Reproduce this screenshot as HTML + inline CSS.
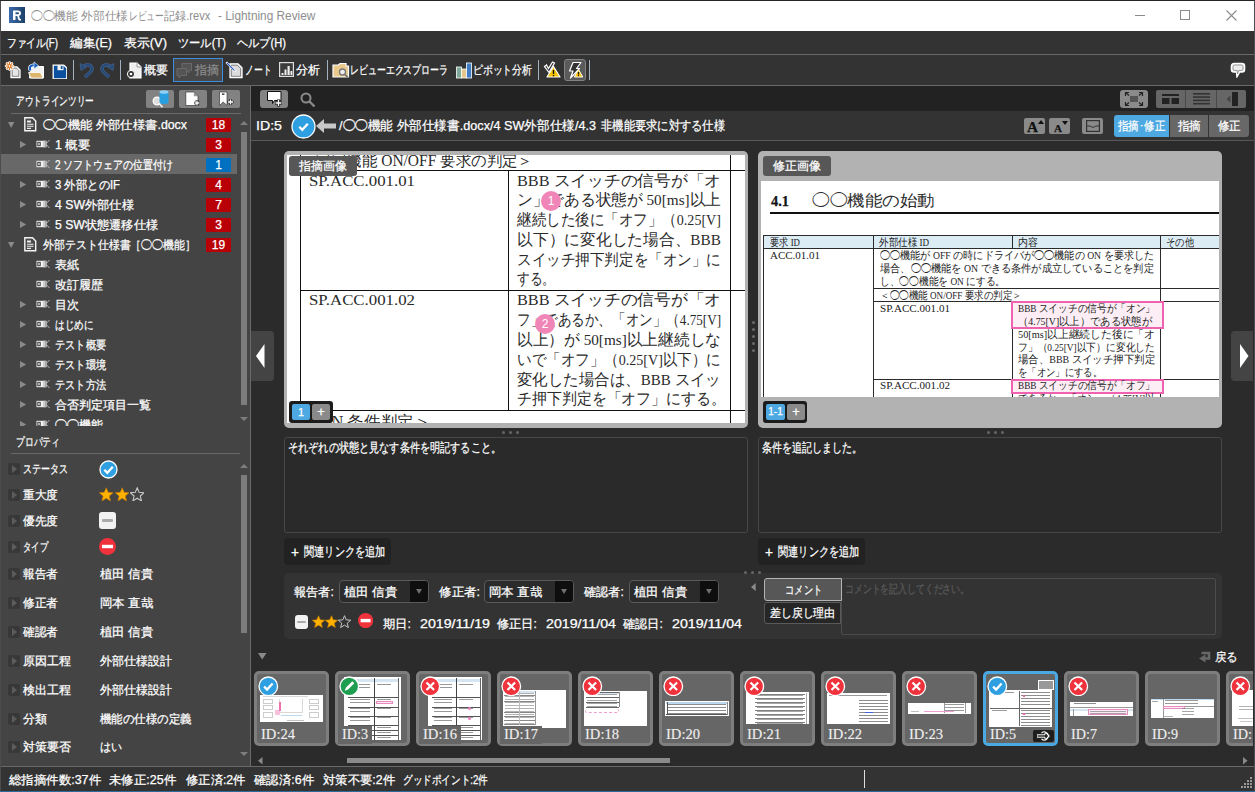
<!DOCTYPE html>
<html lang="ja"><head><meta charset="utf-8"><title>Lightning Review</title><style>
html,body{margin:0;padding:0;}
body{width:1255px;height:792px;overflow:hidden;background:#2b2b2b;position:relative;font-family:"Liberation Sans",sans-serif;font-size:12px;color:#fff;}
div,span,svg{position:absolute;box-sizing:border-box;}
.t{white-space:nowrap;transform-origin:0 50%;display:block;-webkit-text-stroke:.25px currentColor;}
.s{font-family:"Liberation Serif",serif;}
.clip{overflow:hidden;}
.s i{font-style:normal;font-family:"Liberation Sans",sans-serif;}
</style></head><body>
<div style="left:0px;top:0px;width:1255px;height:1px;background:#262626;"></div>
<div style="left:0px;top:1px;width:1px;height:791px;background:#4c4c4c;"></div>
<div style="left:1px;top:1px;width:1253px;height:30px;background:#ffffff;"></div>
<svg style="left:9px;top:7px;" width="16" height="16" viewBox="0 0 16 16"><defs><linearGradient id="ag"><stop offset="0" stop-color="#3c6aac"></stop><stop offset="1" stop-color="#1c4166"></stop></linearGradient></defs><rect width="16" height="16" fill="url(#ag)"></rect><path d="M4 3.500h4.800c2 0 3.200 1.100 3.200 2.700 0 1.300-.8 2.200-2 2.500l.6 2.300c.2.700.6 1 1.400 1V13.500c-1.600.2-2.700-.3-3.100-1.800L8.300 9H6.600V7.300h2c.9 0 1.400-.4 1.400-1.100S9.500 5.200 8.600 5.200H6.500V13H4z" fill="#fff"></path></svg>
<span class="t" style="left: 31px; top: 7.5px; height: 16px; line-height: 16px; font-size: 12px; color: rgb(142, 142, 142); -webkit-text-stroke: 0px; transform: scaleX(0.979);">◯◯機能 外部仕様</span>
<span class="t" style="left: 128.5px; top: 7.5px; height: 16px; line-height: 16px; font-size: 12px; color: rgb(142, 142, 142); -webkit-text-stroke: 0px; transform: scaleX(0.729);">レビュー</span>
<span class="t" style="left: 164px; top: 7.5px; height: 16px; line-height: 16px; font-size: 12px; color: rgb(142, 142, 142); -webkit-text-stroke: 0px; transform: scaleX(0.926);">記録.revx</span>
<span class="t" style="left: 218.2px; top: 7.5px; height: 16px; line-height: 16px; font-size: 12px; color: rgb(142, 142, 142); -webkit-text-stroke: 0px; transform: scaleX(0.986);">- Lightning Review</span>
<div style="left:1135px;top:15px;width:10px;height:1px;background:#8a8a8a;"></div>
<div style="left:1180px;top:10px;width:10px;height:10px;border:1px solid #8a8a8a;"></div>
<svg style="left:1226px;top:10px;" width="11" height="11" viewBox="0 0 11 11"><path d="M.5.5l10 10M10.500.5l-10 10" stroke="#8a8a8a" stroke-width="1.100" fill="none"></path></svg>
<div style="left:1px;top:31px;width:1254px;height:23px;background:#333333;"></div>
<span class="t" style="left: 7px; top: 35px; height: 16px; line-height: 16px; font-size: 12px; color: rgb(255, 255, 255); transform: scaleX(0.805);">ファイル(F)</span>
<span class="t" style="left: 70px; top: 35px; height: 16px; line-height: 16px; font-size: 12px; color: rgb(255, 255, 255); transform: scaleX(1.05);">編集(E)</span>
<span class="t" style="left: 124px; top: 35px; height: 16px; line-height: 16px; font-size: 12px; color: rgb(255, 255, 255); transform: scaleX(1.075);">表示(V)</span>
<span class="t" style="left: 178px; top: 35px; height: 16px; line-height: 16px; font-size: 12px; color: rgb(255, 255, 255); transform: scaleX(0.935);">ツール(T)</span>
<span class="t" style="left: 237px; top: 35px; height: 16px; line-height: 16px; font-size: 12px; color: rgb(255, 255, 255); transform: scaleX(0.93);">ヘルプ(H)</span>
<div style="left:1px;top:54px;width:1254px;height:1px;background:#696969;"></div>
<div style="left:1px;top:55px;width:1254px;height:30px;background:#333333;"></div>
<div style="left:1px;top:85px;width:1254px;height:1px;background:#696969;"></div>
<svg style="left:4px;top:61px;" width="18" height="18" viewBox="0 0 18 18"><path d="M7 6h6l3 3v7.500H7z" fill="#e6e6e6" stroke="#fff" stroke-width="1.300"></path><path d="M8.200 7.200h4.300l2.300 2.300v5.800H8.200z" fill="none" stroke="#444" stroke-width=".6"></path><g stroke="#fff" stroke-width="2.600" stroke-linecap="round"><path d="M5.500 1.500v7M2 5h7M3 2.500l5 5M8 2.500l-5 5"></path></g><g stroke="#e07a22" stroke-width="1.100"><path d="M5.500 1v8M1.500 5h8M2.700 2.200l5.600 5.600M8.300 2.200L2.700 7.800"></path></g><circle cx="5.500" cy="5" r="1.300" fill="#fff" stroke="#e07a22" stroke-width=".8"></circle></svg>
<svg style="left:27px;top:61px;" width="18" height="19" viewBox="0 0 18 19"><path d="M4 5.500h12.500V17H2.500z" fill="#f2f2f2" stroke="#fff" stroke-width="1"></path><path d="M1.500 11.500h12l2.500 5.500H4z" fill="#ddb56c" stroke="#fff" stroke-width=".8"></path><path d="M3.500 9.500C1.500 6 4.500 3.500 8 4.500" fill="none" stroke="#fff" stroke-width="3.400"></path><path d="M3.500 9.500C1.500 6 4.500 3.500 8 4.500" fill="none" stroke="#1560c0" stroke-width="2"></path><path d="M7 1l4.500 3.500L7 8z" fill="#1560c0" stroke="#fff" stroke-width=".6"></path></svg>
<svg style="left:51.5px;top:63.5px;" width="15" height="15" viewBox="0 0 15 15"><path d="M1.200 1.200h10.600L14.800 4v10.800H1.200z" fill="#0b4fa0" stroke="#fff" stroke-width="1.300"></path><rect x="5.500" y="1.200" width="6" height="5" fill="#f4f4f4"></rect><rect x="8.800" y="2" width="1.700" height="3" fill="#0b4fa0"></rect></svg>
<div style="left:73px;top:60px;width:1.3px;height:20px;background:#a4b2c0;"></div>
<svg style="left:78px;top:61px;" width="17" height="18" viewBox="0 0 17 18"><path d="M5.500 5.500C9 2.500 14 4 14 8c0 2.500-3 4.500-7 8" fill="none" stroke="#4a6c94" stroke-width="3.400"></path><path d="M5.500 5.500C9 2.500 14 4 14 8c0 2.500-3 4.500-7 8" fill="none" stroke="#274b78" stroke-width="2.400"></path><path d="M2 2.500l1 7L8.500 6z" fill="#274b78" stroke="#4a6c94" stroke-width=".6"></path></svg>
<svg style="left:99px;top:61px;" width="17" height="18" viewBox="0 0 17 18"><path d="M11.500 5.500C8 2.500 3 4 3 8c0 2.500 3 4.500 7 8" fill="none" stroke="#4a6c94" stroke-width="3.400"></path><path d="M11.500 5.500C8 2.500 3 4 3 8c0 2.500 3 4.500 7 8" fill="none" stroke="#274b78" stroke-width="2.400"></path><path d="M15 2.500l-1 7L8.500 6z" fill="#274b78" stroke="#4a6c94" stroke-width=".6"></path></svg>
<div style="left:120px;top:60px;width:1.3px;height:20px;background:#a4b2c0;"></div>
<svg style="left:126px;top:62px;" width="16" height="17" viewBox="0 0 16 17"><path d="M4 1h7l4 4v11H4z" fill="#eee" stroke="#fff" stroke-width="1.200"></path><path d="M11 1v4h4" fill="none" stroke="#999"></path><circle cx="5" cy="12" r="3.600" fill="#333" stroke="#fff" stroke-width="1"></circle><circle cx="5" cy="12" r="1.300" fill="#fff"></circle></svg>
<span class="t" style="left: 144px; top: 62px; height: 16px; line-height: 16px; font-size: 12px; color: rgb(255, 255, 255); transform: scaleX(1);">概要</span>
<div style="left:173px;top:58px;width:50px;height:24px;background:#484848;border:1px solid #3b8ee0;"></div>
<svg style="left:176px;top:62px;" width="17" height="17" viewBox="0 0 17 17"><path d="M6 1.500h9.500v7H13v2.500L10.500 8.500H6z" fill="#555" stroke="#6a6a6a"></path><path d="M1 6.500h9.500v7H5.500L3 16v-2.500H1z" fill="#555" stroke="#6a6a6a"></path></svg>
<span class="t" style="left: 195px; top: 62px; height: 16px; line-height: 16px; font-size: 12px; color: rgb(138, 138, 138); transform: scaleX(1);">指摘</span>
<svg style="left:225px;top:60px;" width="18" height="19" viewBox="0 0 18 19"><path d="M5 3.800h8l4 4V17.500H5z" fill="#dcdcdc" stroke="#fff" stroke-width="1.300"></path><path d="M6.300 5.200h6l3.300 3.300v7.800H6.300z" fill="none" stroke="#444" stroke-width=".6"></path><path d="M2 1.500l7.500 7.500 2 3.500-3.500-2L.5 3z" fill="#fff"></path><path d="M2.200 2.500l6.500 6.500 1.500 2.300-2.300-1.500L1.400 3.300z" fill="#1b55b8"></path></svg>
<span class="t" style="left: 244.5px; top: 62px; height: 16px; line-height: 16px; font-size: 12px; color: rgb(255, 255, 255); transform: scaleX(0.736);">ノート</span>
<svg style="left:279px;top:62px;" width="15" height="15" viewBox="0 0 15 15"><rect x=".6" y=".6" width="13.800" height="13.800" fill="#3c3c3c" stroke="#ddd" stroke-width="1.200"></rect><rect x="2.500" y="11" width="2" height="2" fill="#eee"></rect><rect x="5.500" y="7.500" width="2" height="5.500" fill="#eee"></rect><rect x="8.500" y="4" width="2.200" height="9" fill="#eee"></rect><rect x="11.500" y="9" width="1.800" height="4" fill="#eee"></rect></svg>
<span class="t" style="left: 296px; top: 62px; height: 16px; line-height: 16px; font-size: 12px; color: rgb(255, 255, 255); transform: scaleX(1);">分析</span>
<div style="left:327px;top:60px;width:1.3px;height:20px;background:#a4b2c0;"></div>
<svg style="left:332px;top:62px;" width="18" height="17" viewBox="0 0 18 17"><path d="M1 3h5.500L8 1.500h6V4h2.500v11H1z" fill="#e9c98c" stroke="#fff" stroke-width="1.200"></path><circle cx="10.500" cy="10" r="3" fill="#eee" stroke="#777" stroke-width="1.300"></circle><path d="M12.800 12.300l3 3" stroke="#777" stroke-width="1.800"></path></svg>
<span class="t" style="left: 350px; top: 62px; height: 16px; line-height: 16px; font-size: 12px; color: rgb(255, 255, 255); transform: scaleX(0.742);">レビューエクスプローラ</span>
<svg style="left:456px;top:62px;" width="17" height="17" viewBox="0 0 17 17"><rect x=".5" y="5" width="5" height="11" fill="#7fa898" stroke="#fff" stroke-width=".8"></rect><rect x="5.500" y="7" width="5" height="9" fill="#e6c88e" stroke="#fff" stroke-width=".8"></rect><rect x="10.500" y="1" width="5" height="15" fill="#3f7cc4" stroke="#fff" stroke-width=".8"></rect></svg>
<span class="t" style="left: 473px; top: 62px; height: 16px; line-height: 16px; font-size: 12px; color: rgb(255, 255, 255); transform: scaleX(0.819);">ピボット分析</span>
<div style="left:538px;top:60px;width:1.3px;height:20px;background:#a4b2c0;"></div>
<svg style="left:543px;top:60px;" width="18" height="19" viewBox="0 0 18 19"><path d="M1.500 6.500l2-1.500 2 3.500L9.500 2l2 1L6 12.500z" fill="#333" stroke="#fff" stroke-width="1.200"></path><path d="M10.500 6.500l6.500 10.500H4z" fill="#fcc400" stroke="#fff" stroke-width="1.200" stroke-linejoin="round"></path><path d="M10.500 10v4M10.500 15v1.300" stroke="#111" stroke-width="1.400"></path></svg>
<div style="left:564px;top:59px;width:22px;height:22px;background:#5a5a5a;border:1px solid #828282;border-radius:3px;"></div>
<svg style="left:566px;top:60px;" width="19" height="20" viewBox="0 0 19 20"><path d="M7 2.500h8l-4.500 6h3L4.500 18l2.500-7H3.500z" fill="#333" stroke="#fff" stroke-width="1.200" stroke-linejoin="round"></path><path d="M12.500 9.500l4.300 7.500H8.200z" fill="#fcc400" stroke="#fff" stroke-width="1" stroke-linejoin="round"></path><path d="M12.500 12v2.500M12.500 15.300v1" stroke="#111" stroke-width="1.300"></path></svg>
<div style="left:589px;top:60px;width:1.3px;height:20px;background:#a4b2c0;"></div>
<svg style="left:1230px;top:62px;" width="16" height="16" viewBox="0 0 16 16"><path d="M4 1.500h8a2.500 2.500 0 012.500 2.500v3.500a2.500 2.500 0 01-2.500 2.500H9.500L7 14.500 6.500 10H4a2.500 2.500 0 01-2.500-2.500V4A2.500 2.500 0 014 1.500z" fill="#ececec" stroke="#fff" stroke-width="1.600"></path><path d="M4.500 3h7a1.500 1.500 0 011.500 1.500v2.500a1.500 1.500 0 01-1.500 1.500H8.800L7.500 12 7.200 8.500H4.500a1.500 1.500 0 01-1.500-1.500V4.500A1.500 1.500 0 014.500 3z" fill="none" stroke="#777" stroke-width=".7"></path></svg>
<div style="left:1px;top:86px;width:249px;height:680px;background:#444444;"></div>
<div style="left:250px;top:86px;width:1px;height:680px;background:#696969;"></div>
<span class="t" style="left: 16px; top: 93px; height: 16px; line-height: 16px; font-size: 12px; color: rgb(255, 255, 255); transform: scaleX(0.722);">アウトラインツリー</span>
<div style="left:146px;top:90px;width:28px;height:18px;background:#828282;border-radius:2px;"></div>
<svg style="left:150px;top:89px;" width="22" height="20" viewBox="0 0 22 20"><circle cx="7" cy="12" r="3.800" fill="#ddd" stroke="#fff" stroke-width="1.300"></circle><path d="M9.500 15l3 3.200" stroke="#eee" stroke-width="1.800"></path><path d="M9.500 3v10a4.500 2 0 009 0V3z" fill="#2a9fe0"></path><ellipse cx="14" cy="3" rx="4.500" ry="1.800" fill="#8fd0f7"></ellipse></svg>
<div style="left:179px;top:90px;width:28px;height:18px;background:#828282;border-radius:2px;"></div>
<svg style="left:185px;top:91px;" width="17" height="17" viewBox="0 0 17 17"><path d="M.8 1h8l4.200 4.200V14.500H.8z" fill="#fff" stroke="#222" stroke-width=".6"></path><path d="M8.800 1v4.200h4.200z" fill="#999"></path><path d="M12 9v6M9 12h6" stroke="#222" stroke-width="2.600"></path><path d="M12 9.500v5M9.500 12h5" stroke="#fff" stroke-width="1.300"></path></svg>
<div style="left:212px;top:90px;width:28px;height:18px;background:#828282;border-radius:2px;"></div>
<svg style="left:218px;top:91px;" width="17" height="17" viewBox="0 0 17 17"><path d="M1.500 1h7.500v13.500L5.200 11 1.500 14.500z" fill="#fff" stroke="#222" stroke-width=".6"></path><rect x="4" y="2.500" width="2.500" height="1.300" fill="#222"></rect><path d="M12.500 8v6M9.500 11h6" stroke="#222" stroke-width="2.600"></path><path d="M12.500 8.500v5M10 11h5" stroke="#fff" stroke-width="1.300"></path></svg>
<div style="left:11px;top:113px;width:230px;height:1px;background:#6a6a6a;"></div>
<div class="clip" style="left:1px;top:114px;width:237px;height:312px;">
<svg style="left:7px;top:7.5px;" width="7" height="6" viewBox="0 0 7 6"><path d="M0 0h6.400L3.200 6z" fill="#8a8a8a"></path></svg>
<svg style="left:23px;top:3.0px;" width="13" height="15" viewBox="0 0 13 15"><path d="M.8.800h7.700l3.200 3.200v9.700H.8z" fill="#4a4a4a" stroke="#f4f4f4" stroke-width="1.400"></path><path d="M3 3.500h4v2H3z" fill="#eee"></path><path d="M3 7.200h6.500M3 9.300h6.500M3 11.400h4" stroke="#eee" stroke-width="1.100"></path></svg>
<span class="t" style="left: 42px; top: 2.5px; height: 16px; line-height: 16px; font-size: 12px; color: rgb(255, 255, 255); transform: scaleX(1.028);">◯◯機能 外部仕様書.docx</span>
<div style="left:205px;top:3.5px;width:25px;height:14px;background:#b80006;"></div>
<span class="t" style="left:205px;top:3.5px;height:14px;line-height:14px;font-size:12px;color:#fff;width:25px;text-align:center;">18</span>
<svg style="left:19px;top:26.6px;" width="7" height="7" viewBox="0 0 7 7"><path d="M0 0l6.200 3.500L0 7z" fill="#8a8a8a"></path></svg>
<svg style="left:34.6px;top:25.7px;" width="15" height="8" viewBox="0 0 15 8"><rect x=".5" y=".8" width="10" height="6.400" fill="#f0f0f0"></rect><rect x="7" y=".8" width="1.800" height="6.400" fill="#d0d0d0"></rect><rect x="8.800" y=".8" width="1.700" height="6.400" fill="#a8a8a8"></rect><rect x="1.800" y="2.300" width="2.400" height="3.400" fill="#ddd" stroke="#333" stroke-width=".9"></rect><path d="M13.500 0L9.800 4l3.700 4" fill="none" stroke="#bbb" stroke-width=".9"></path></svg>
<span class="t" style="left: 54px; top: 22.5px; height: 16px; line-height: 16px; font-size: 12px; color: rgb(255, 255, 255); transform: scaleX(1.029);">1 概要</span>
<div style="left:205px;top:23.5px;width:25px;height:14px;background:#b80006;"></div>
<span class="t" style="left:205px;top:23.5px;height:14px;line-height:14px;font-size:12px;color:#fff;width:25px;text-align:center;">3</span>
<div style="left:0px;top:40.0px;width:236px;height:20px;background:#686868;"></div>
<svg style="left:34.6px;top:45.7px;" width="15" height="8" viewBox="0 0 15 8"><rect x=".5" y=".8" width="10" height="6.400" fill="#f0f0f0"></rect><rect x="7" y=".8" width="1.800" height="6.400" fill="#d0d0d0"></rect><rect x="8.800" y=".8" width="1.700" height="6.400" fill="#a8a8a8"></rect><rect x="1.800" y="2.300" width="2.400" height="3.400" fill="#ddd" stroke="#333" stroke-width=".9"></rect><path d="M13.500 0L9.800 4l3.700 4" fill="none" stroke="#bbb" stroke-width=".9"></path></svg>
<span class="t" style="left: 54px; top: 42.5px; height: 16px; line-height: 16px; font-size: 12px; color: rgb(255, 255, 255); transform: scaleX(0.831);">2 ソフトウェアの位置付け</span>
<div style="left:205px;top:43.5px;width:25px;height:14px;background:#0070c0;"></div>
<span class="t" style="left:205px;top:43.5px;height:14px;line-height:14px;font-size:12px;color:#fff;width:25px;text-align:center;">1</span>
<svg style="left:19px;top:66.6px;" width="7" height="7" viewBox="0 0 7 7"><path d="M0 0l6.200 3.500L0 7z" fill="#8a8a8a"></path></svg>
<svg style="left:34.6px;top:65.7px;" width="15" height="8" viewBox="0 0 15 8"><rect x=".5" y=".8" width="10" height="6.400" fill="#f0f0f0"></rect><rect x="7" y=".8" width="1.800" height="6.400" fill="#d0d0d0"></rect><rect x="8.800" y=".8" width="1.700" height="6.400" fill="#a8a8a8"></rect><rect x="1.800" y="2.300" width="2.400" height="3.400" fill="#ddd" stroke="#333" stroke-width=".9"></rect><path d="M13.500 0L9.800 4l3.700 4" fill="none" stroke="#bbb" stroke-width=".9"></path></svg>
<span class="t" style="left: 54px; top: 62.5px; height: 16px; line-height: 16px; font-size: 12px; color: rgb(255, 255, 255); transform: scaleX(0.947);">3 外部とのIF</span>
<div style="left:205px;top:63.5px;width:25px;height:14px;background:#b80006;"></div>
<span class="t" style="left:205px;top:63.5px;height:14px;line-height:14px;font-size:12px;color:#fff;width:25px;text-align:center;">4</span>
<svg style="left:19px;top:86.6px;" width="7" height="7" viewBox="0 0 7 7"><path d="M0 0l6.200 3.500L0 7z" fill="#8a8a8a"></path></svg>
<svg style="left:34.6px;top:85.7px;" width="15" height="8" viewBox="0 0 15 8"><rect x=".5" y=".8" width="10" height="6.400" fill="#f0f0f0"></rect><rect x="7" y=".8" width="1.800" height="6.400" fill="#d0d0d0"></rect><rect x="8.800" y=".8" width="1.700" height="6.400" fill="#a8a8a8"></rect><rect x="1.800" y="2.300" width="2.400" height="3.400" fill="#ddd" stroke="#333" stroke-width=".9"></rect><path d="M13.500 0L9.800 4l3.700 4" fill="none" stroke="#bbb" stroke-width=".9"></path></svg>
<span class="t" style="left: 54px; top: 82.5px; height: 16px; line-height: 16px; font-size: 12px; color: rgb(255, 255, 255); transform: scaleX(1.021);">4 SW外部仕様</span>
<div style="left:205px;top:83.5px;width:25px;height:14px;background:#b80006;"></div>
<span class="t" style="left:205px;top:83.5px;height:14px;line-height:14px;font-size:12px;color:#fff;width:25px;text-align:center;">7</span>
<svg style="left:19px;top:106.6px;" width="7" height="7" viewBox="0 0 7 7"><path d="M0 0l6.200 3.500L0 7z" fill="#8a8a8a"></path></svg>
<svg style="left:34.6px;top:105.7px;" width="15" height="8" viewBox="0 0 15 8"><rect x=".5" y=".8" width="10" height="6.400" fill="#f0f0f0"></rect><rect x="7" y=".8" width="1.800" height="6.400" fill="#d0d0d0"></rect><rect x="8.800" y=".8" width="1.700" height="6.400" fill="#a8a8a8"></rect><rect x="1.800" y="2.300" width="2.400" height="3.400" fill="#ddd" stroke="#333" stroke-width=".9"></rect><path d="M13.500 0L9.800 4l3.700 4" fill="none" stroke="#bbb" stroke-width=".9"></path></svg>
<span class="t" style="left: 54px; top: 102.5px; height: 16px; line-height: 16px; font-size: 12px; color: rgb(255, 255, 255); transform: scaleX(1.016);">5 SW状態遷移仕様</span>
<div style="left:205px;top:103.5px;width:25px;height:14px;background:#b80006;"></div>
<span class="t" style="left:205px;top:103.5px;height:14px;line-height:14px;font-size:12px;color:#fff;width:25px;text-align:center;">3</span>
<svg style="left:7px;top:127.5px;" width="7" height="6" viewBox="0 0 7 6"><path d="M0 0h6.400L3.200 6z" fill="#8a8a8a"></path></svg>
<svg style="left:23px;top:123.0px;" width="13" height="15" viewBox="0 0 13 15"><path d="M.8.800h7.700l3.200 3.200v9.700H.8z" fill="#4a4a4a" stroke="#f4f4f4" stroke-width="1.400"></path><path d="M3 3.500h4v2H3z" fill="#eee"></path><path d="M3 7.200h6.500M3 9.300h6.500M3 11.400h4" stroke="#eee" stroke-width="1.100"></path></svg>
<span class="t" style="left: 42px; top: 122.5px; height: 16px; line-height: 16px; font-size: 12px; color: rgb(255, 255, 255); transform: scaleX(0.911);">外部テスト仕様書［◯◯機能］</span>
<div style="left:205px;top:123.5px;width:25px;height:14px;background:#b80006;"></div>
<span class="t" style="left:205px;top:123.5px;height:14px;line-height:14px;font-size:12px;color:#fff;width:25px;text-align:center;">19</span>
<svg style="left:34.6px;top:145.7px;" width="15" height="8" viewBox="0 0 15 8"><rect x=".5" y=".8" width="10" height="6.400" fill="#f0f0f0"></rect><rect x="7" y=".8" width="1.800" height="6.400" fill="#d0d0d0"></rect><rect x="8.800" y=".8" width="1.700" height="6.400" fill="#a8a8a8"></rect><rect x="1.800" y="2.300" width="2.400" height="3.400" fill="#ddd" stroke="#333" stroke-width=".9"></rect><path d="M13.500 0L9.800 4l3.700 4" fill="none" stroke="#bbb" stroke-width=".9"></path></svg>
<span class="t" style="left: 54px; top: 142.5px; height: 16px; line-height: 16px; font-size: 12px; color: rgb(255, 255, 255); transform: scaleX(1);">表紙</span>
<svg style="left:34.6px;top:165.7px;" width="15" height="8" viewBox="0 0 15 8"><rect x=".5" y=".8" width="10" height="6.400" fill="#f0f0f0"></rect><rect x="7" y=".8" width="1.800" height="6.400" fill="#d0d0d0"></rect><rect x="8.800" y=".8" width="1.700" height="6.400" fill="#a8a8a8"></rect><rect x="1.800" y="2.300" width="2.400" height="3.400" fill="#ddd" stroke="#333" stroke-width=".9"></rect><path d="M13.500 0L9.800 4l3.700 4" fill="none" stroke="#bbb" stroke-width=".9"></path></svg>
<span class="t" style="left: 54px; top: 162.5px; height: 16px; line-height: 16px; font-size: 12px; color: rgb(255, 255, 255); transform: scaleX(1);">改訂履歴</span>
<svg style="left:19px;top:186.6px;" width="7" height="7" viewBox="0 0 7 7"><path d="M0 0l6.200 3.500L0 7z" fill="#8a8a8a"></path></svg>
<svg style="left:34.6px;top:185.7px;" width="15" height="8" viewBox="0 0 15 8"><rect x=".5" y=".8" width="10" height="6.400" fill="#f0f0f0"></rect><rect x="7" y=".8" width="1.800" height="6.400" fill="#d0d0d0"></rect><rect x="8.800" y=".8" width="1.700" height="6.400" fill="#a8a8a8"></rect><rect x="1.800" y="2.300" width="2.400" height="3.400" fill="#ddd" stroke="#333" stroke-width=".9"></rect><path d="M13.500 0L9.800 4l3.700 4" fill="none" stroke="#bbb" stroke-width=".9"></path></svg>
<span class="t" style="left: 54px; top: 182.5px; height: 16px; line-height: 16px; font-size: 12px; color: rgb(255, 255, 255); transform: scaleX(1);">目次</span>
<svg style="left:19px;top:206.6px;" width="7" height="7" viewBox="0 0 7 7"><path d="M0 0l6.200 3.500L0 7z" fill="#8a8a8a"></path></svg>
<svg style="left:34.6px;top:205.7px;" width="15" height="8" viewBox="0 0 15 8"><rect x=".5" y=".8" width="10" height="6.400" fill="#f0f0f0"></rect><rect x="7" y=".8" width="1.800" height="6.400" fill="#d0d0d0"></rect><rect x="8.800" y=".8" width="1.700" height="6.400" fill="#a8a8a8"></rect><rect x="1.800" y="2.300" width="2.400" height="3.400" fill="#ddd" stroke="#333" stroke-width=".9"></rect><path d="M13.500 0L9.800 4l3.700 4" fill="none" stroke="#bbb" stroke-width=".9"></path></svg>
<span class="t" style="left: 54px; top: 202.5px; height: 16px; line-height: 16px; font-size: 12px; color: rgb(255, 255, 255); transform: scaleX(0.792);">はじめに</span>
<svg style="left:19px;top:226.6px;" width="7" height="7" viewBox="0 0 7 7"><path d="M0 0l6.200 3.500L0 7z" fill="#8a8a8a"></path></svg>
<svg style="left:34.6px;top:225.7px;" width="15" height="8" viewBox="0 0 15 8"><rect x=".5" y=".8" width="10" height="6.400" fill="#f0f0f0"></rect><rect x="7" y=".8" width="1.800" height="6.400" fill="#d0d0d0"></rect><rect x="8.800" y=".8" width="1.700" height="6.400" fill="#a8a8a8"></rect><rect x="1.800" y="2.300" width="2.400" height="3.400" fill="#ddd" stroke="#333" stroke-width=".9"></rect><path d="M13.500 0L9.800 4l3.700 4" fill="none" stroke="#bbb" stroke-width=".9"></path></svg>
<span class="t" style="left: 54px; top: 222.5px; height: 16px; line-height: 16px; font-size: 12px; color: rgb(255, 255, 255); transform: scaleX(0.85);">テスト概要</span>
<svg style="left:19px;top:246.6px;" width="7" height="7" viewBox="0 0 7 7"><path d="M0 0l6.200 3.500L0 7z" fill="#8a8a8a"></path></svg>
<svg style="left:34.6px;top:245.7px;" width="15" height="8" viewBox="0 0 15 8"><rect x=".5" y=".8" width="10" height="6.400" fill="#f0f0f0"></rect><rect x="7" y=".8" width="1.800" height="6.400" fill="#d0d0d0"></rect><rect x="8.800" y=".8" width="1.700" height="6.400" fill="#a8a8a8"></rect><rect x="1.800" y="2.300" width="2.400" height="3.400" fill="#ddd" stroke="#333" stroke-width=".9"></rect><path d="M13.500 0L9.800 4l3.700 4" fill="none" stroke="#bbb" stroke-width=".9"></path></svg>
<span class="t" style="left: 54px; top: 242.5px; height: 16px; line-height: 16px; font-size: 12px; color: rgb(255, 255, 255); transform: scaleX(0.85);">テスト環境</span>
<svg style="left:19px;top:266.6px;" width="7" height="7" viewBox="0 0 7 7"><path d="M0 0l6.200 3.500L0 7z" fill="#8a8a8a"></path></svg>
<svg style="left:34.6px;top:265.7px;" width="15" height="8" viewBox="0 0 15 8"><rect x=".5" y=".8" width="10" height="6.400" fill="#f0f0f0"></rect><rect x="7" y=".8" width="1.800" height="6.400" fill="#d0d0d0"></rect><rect x="8.800" y=".8" width="1.700" height="6.400" fill="#a8a8a8"></rect><rect x="1.800" y="2.300" width="2.400" height="3.400" fill="#ddd" stroke="#333" stroke-width=".9"></rect><path d="M13.500 0L9.800 4l3.700 4" fill="none" stroke="#bbb" stroke-width=".9"></path></svg>
<span class="t" style="left: 54px; top: 262.5px; height: 16px; line-height: 16px; font-size: 12px; color: rgb(255, 255, 255); transform: scaleX(0.85);">テスト方法</span>
<svg style="left:19px;top:286.6px;" width="7" height="7" viewBox="0 0 7 7"><path d="M0 0l6.200 3.500L0 7z" fill="#8a8a8a"></path></svg>
<svg style="left:34.6px;top:285.7px;" width="15" height="8" viewBox="0 0 15 8"><rect x=".5" y=".8" width="10" height="6.400" fill="#f0f0f0"></rect><rect x="7" y=".8" width="1.800" height="6.400" fill="#d0d0d0"></rect><rect x="8.800" y=".8" width="1.700" height="6.400" fill="#a8a8a8"></rect><rect x="1.800" y="2.300" width="2.400" height="3.400" fill="#ddd" stroke="#333" stroke-width=".9"></rect><path d="M13.500 0L9.800 4l3.700 4" fill="none" stroke="#bbb" stroke-width=".9"></path></svg>
<span class="t" style="left: 54px; top: 282.5px; height: 16px; line-height: 16px; font-size: 12px; color: rgb(255, 255, 255); transform: scaleX(1);">合否判定項目一覧</span>
<svg style="left:19px;top:306.6px;" width="7" height="7" viewBox="0 0 7 7"><path d="M0 0l6.200 3.500L0 7z" fill="#8a8a8a"></path></svg>
<svg style="left:34.6px;top:305.7px;" width="15" height="8" viewBox="0 0 15 8"><rect x=".5" y=".8" width="10" height="6.400" fill="#f0f0f0"></rect><rect x="7" y=".8" width="1.800" height="6.400" fill="#d0d0d0"></rect><rect x="8.800" y=".8" width="1.700" height="6.400" fill="#a8a8a8"></rect><rect x="1.800" y="2.300" width="2.400" height="3.400" fill="#ddd" stroke="#333" stroke-width=".9"></rect><path d="M13.500 0L9.800 4l3.700 4" fill="none" stroke="#bbb" stroke-width=".9"></path></svg>
<span class="t" style="left: 54px; top: 302.5px; height: 16px; line-height: 16px; font-size: 12px; color: rgb(255, 255, 255); transform: scaleX(1);">◯◯機能</span>
</div>
<svg style="left:240px;top:121px;" width="8" height="4" viewBox="0 0 8 4"><path d="M0 4h8L4 0z" fill="#7d7d7d"></path></svg>
<div style="left:241px;top:132px;width:5.5px;height:273px;background:#7d7d7d;"></div>
<svg style="left:240px;top:417px;" width="8" height="4" viewBox="0 0 8 4"><path d="M0 0h8L4 4z" fill="#7d7d7d"></path></svg>
<span class="t" style="left: 16px; top: 434px; height: 16px; line-height: 16px; font-size: 12px; color: rgb(255, 255, 255); transform: scaleX(0.733);">プロパティ</span>
<div style="left:11px;top:453px;width:229px;height:1px;background:#686868;"></div>
<svg style="left:240px;top:464px;" width="8" height="4" viewBox="0 0 8 4"><path d="M0 4h8L4 0z" fill="#7d7d7d"></path></svg>
<div style="left:241px;top:475px;width:5.5px;height:158px;background:#7d7d7d;"></div>
<svg style="left:240px;top:752px;" width="8" height="4" viewBox="0 0 8 4"><path d="M0 0h8L4 4z" fill="#7d7d7d"></path></svg>
<div style="left:8px;top:463px;width:12px;height:12px;background:#383838;border-radius:2px;"></div>
<svg style="left:12px;top:465px;" width="5" height="8" viewBox="0 0 5 8"><path d="M0 0l5 4-5 4z" fill="#5c5c5c"></path></svg>
<span class="t" style="left: 23px; top: 461px; height: 16px; line-height: 16px; font-size: 12px; color: rgb(255, 255, 255); transform: scaleX(0.75);">ステータス</span>
<svg style="left:98.5px;top:459.5px;" width="19.0" height="19.0" viewBox="0 0 19.0 19.0"><circle cx="9.5" cy="9.5" r="8.5" fill="#2e9fe0" stroke="#fff" stroke-width="1.300"></circle><path d="M5.3 9.8l3 3 5.500-6" fill="none" stroke="#fff" stroke-width="2.300"></path></svg>
<div style="left:8px;top:489px;width:12px;height:12px;background:#383838;border-radius:2px;"></div>
<svg style="left:12px;top:491px;" width="5" height="8" viewBox="0 0 5 8"><path d="M0 0l5 4-5 4z" fill="#5c5c5c"></path></svg>
<span class="t" style="left: 23px; top: 487px; height: 16px; line-height: 16px; font-size: 12px; color: rgb(255, 255, 255); transform: scaleX(0.972);">重大度</span>
<svg style="left:99.3px;top:486.5px;" width="14.4" height="14.4" viewBox="0 0 15 15"><polygon points="7.500,0.800 9.500,5.600 14.700,6 10.700,9.400 12,14.500 7.500,11.700 3,14.500 4.300,9.400 0.300,6 5.500,5.600" fill="#ffb300" stroke="#c77a00" stroke-width=".7"></polygon></svg>
<svg style="left:114.6px;top:486.5px;" width="14.4" height="14.4" viewBox="0 0 15 15"><polygon points="7.500,0.800 9.500,5.600 14.700,6 10.700,9.400 12,14.500 7.500,11.700 3,14.500 4.300,9.400 0.300,6 5.500,5.600" fill="#ffb300" stroke="#c77a00" stroke-width=".7"></polygon></svg>
<svg style="left:130px;top:486.5px;" width="14.4" height="14.4" viewBox="0 0 15 15"><polygon points="7.500,0.800 9.500,5.600 14.700,6 10.700,9.400 12,14.500 7.500,11.700 3,14.500 4.300,9.400 0.300,6 5.500,5.600" fill="none" stroke="#ccc" stroke-width="1.100"></polygon></svg>
<div style="left:8px;top:515px;width:12px;height:12px;background:#383838;border-radius:2px;"></div>
<svg style="left:12px;top:517px;" width="5" height="8" viewBox="0 0 5 8"><path d="M0 0l5 4-5 4z" fill="#5c5c5c"></path></svg>
<span class="t" style="left: 23px; top: 513px; height: 16px; line-height: 16px; font-size: 12px; color: rgb(255, 255, 255); transform: scaleX(0.972);">優先度</span>
<div style="left:99px;top:511.5px;width:17px;height:17px;background:#f2f2f2;border-radius:3px;"></div>
<div style="left:102.4px;top:519px;width:10.2px;height:2.5px;background:#aaa;border-radius:1px;"></div>
<div style="left:8px;top:541px;width:12px;height:12px;background:#383838;border-radius:2px;"></div>
<svg style="left:12px;top:543px;" width="5" height="8" viewBox="0 0 5 8"><path d="M0 0l5 4-5 4z" fill="#5c5c5c"></path></svg>
<span class="t" style="left: 23px; top: 539px; height: 16px; line-height: 16px; font-size: 12px; color: rgb(255, 255, 255); transform: scaleX(0.694);">タイプ</span>
<svg style="left:99.0px;top:537.7px;" width="17.0" height="17.0" viewBox="0 0 17.0 17.0"><circle cx="8.5" cy="8.5" r="8.5" fill="#f0323c"></circle><rect x="2.9749999999999996" y="6.8" width="11.05" height="3.400" fill="#fff"></rect></svg>
<div style="left:8px;top:568px;width:12px;height:12px;background:#383838;border-radius:2px;"></div>
<svg style="left:12px;top:570px;" width="5" height="8" viewBox="0 0 5 8"><path d="M0 0l5 4-5 4z" fill="#5c5c5c"></path></svg>
<span class="t" style="left: 23px; top: 566px; height: 16px; line-height: 16px; font-size: 12px; color: rgb(255, 255, 255); transform: scaleX(0.972);">報告者</span>
<span class="t" style="left: 100px; top: 566px; height: 16px; line-height: 16px; font-size: 12px; color: rgb(255, 255, 255); transform: scaleX(1.032);">植田 信貴</span>
<div style="left:8px;top:597px;width:12px;height:12px;background:#383838;border-radius:2px;"></div>
<svg style="left:12px;top:599px;" width="5" height="8" viewBox="0 0 5 8"><path d="M0 0l5 4-5 4z" fill="#5c5c5c"></path></svg>
<span class="t" style="left: 23px; top: 595px; height: 16px; line-height: 16px; font-size: 12px; color: rgb(255, 255, 255); transform: scaleX(0.972);">修正者</span>
<span class="t" style="left: 100px; top: 595px; height: 16px; line-height: 16px; font-size: 12px; color: rgb(255, 255, 255); transform: scaleX(1.032);">岡本 直哉</span>
<div style="left:8px;top:626px;width:12px;height:12px;background:#383838;border-radius:2px;"></div>
<svg style="left:12px;top:628px;" width="5" height="8" viewBox="0 0 5 8"><path d="M0 0l5 4-5 4z" fill="#5c5c5c"></path></svg>
<span class="t" style="left: 23px; top: 624px; height: 16px; line-height: 16px; font-size: 12px; color: rgb(255, 255, 255); transform: scaleX(0.972);">確認者</span>
<span class="t" style="left: 100px; top: 624px; height: 16px; line-height: 16px; font-size: 12px; color: rgb(255, 255, 255); transform: scaleX(1.032);">植田 信貴</span>
<div style="left:8px;top:655px;width:12px;height:12px;background:#383838;border-radius:2px;"></div>
<svg style="left:12px;top:657px;" width="5" height="8" viewBox="0 0 5 8"><path d="M0 0l5 4-5 4z" fill="#5c5c5c"></path></svg>
<span class="t" style="left: 23px; top: 653px; height: 16px; line-height: 16px; font-size: 12px; color: rgb(255, 255, 255); transform: scaleX(1);">原因工程</span>
<span class="t" style="left: 100px; top: 653px; height: 16px; line-height: 16px; font-size: 12px; color: rgb(255, 255, 255); transform: scaleX(1);">外部仕様設計</span>
<div style="left:8px;top:684px;width:12px;height:12px;background:#383838;border-radius:2px;"></div>
<svg style="left:12px;top:686px;" width="5" height="8" viewBox="0 0 5 8"><path d="M0 0l5 4-5 4z" fill="#5c5c5c"></path></svg>
<span class="t" style="left: 23px; top: 682px; height: 16px; line-height: 16px; font-size: 12px; color: rgb(255, 255, 255); transform: scaleX(1);">検出工程</span>
<span class="t" style="left: 100px; top: 682px; height: 16px; line-height: 16px; font-size: 12px; color: rgb(255, 255, 255); transform: scaleX(1);">外部仕様設計</span>
<div style="left:8px;top:713px;width:12px;height:12px;background:#383838;border-radius:2px;"></div>
<svg style="left:12px;top:715px;" width="5" height="8" viewBox="0 0 5 8"><path d="M0 0l5 4-5 4z" fill="#5c5c5c"></path></svg>
<span class="t" style="left: 23px; top: 711px; height: 16px; line-height: 16px; font-size: 12px; color: rgb(255, 255, 255); transform: scaleX(1);">分類</span>
<span class="t" style="left: 100px; top: 711px; height: 16px; line-height: 16px; font-size: 12px; color: rgb(255, 255, 255); transform: scaleX(0.958);">機能の仕様の定義</span>
<div style="left:8px;top:741px;width:12px;height:12px;background:#383838;border-radius:2px;"></div>
<svg style="left:12px;top:743px;" width="5" height="8" viewBox="0 0 5 8"><path d="M0 0l5 4-5 4z" fill="#5c5c5c"></path></svg>
<span class="t" style="left: 23px; top: 739px; height: 16px; line-height: 16px; font-size: 12px; color: rgb(255, 255, 255); transform: scaleX(1);">対策要否</span>
<span class="t" style="left: 100px; top: 739px; height: 16px; line-height: 16px; font-size: 12px; color: rgb(255, 255, 255); transform: scaleX(0.917);">はい</span>
<div style="left:251px;top:86px;width:1004px;height:25px;background:#222222;"></div>
<div style="left:251px;top:111px;width:1004px;height:29px;background:#333333;"></div>
<div style="left:251px;top:140px;width:1004px;height:1px;background:#585858;"></div>
<div style="left:260px;top:90px;width:28px;height:18px;background:#848484;border-radius:3px;"></div>
<svg style="left:266px;top:90px;" width="18" height="18" viewBox="0 0 18 18"><path d="M1.500 1.500h13.500v9H8.500L6.500 13.500V10.500H1.500z" fill="#fff" stroke="#111" stroke-width="1"></path><path d="M12.500 9.500v7M9 13h7" stroke="#111" stroke-width="3"></path><path d="M12.500 10v6M9.500 13h6" stroke="#fff" stroke-width="1.400"></path></svg>
<svg style="left:300px;top:92px;" width="16" height="16" viewBox="0 0 16 16"><circle cx="6" cy="6" r="4.500" fill="none" stroke="#8a8a8a" stroke-width="2"></circle><path d="M9.500 9.500l5 5" stroke="#8a8a8a" stroke-width="2.400"></path></svg>
<div style="left:1120px;top:90px;width:28px;height:18px;background:#8a8a8a;border-radius:3px;"></div>
<svg style="left:1124px;top:91px;" width="20" height="16" viewBox="0 0 20 16"><rect x="6" y="5" width="8" height="6" fill="#555"></rect><g stroke="#222" stroke-width="1.200" fill="none"><path d="M1.500 5V1.500H5M1.500 1.500l3.500 3"></path><path d="M18.500 5V1.500H15M18.500 1.500l-3.500 3"></path><path d="M1.500 11v3.500H5M1.500 14.500l3.500-3"></path><path d="M18.500 11v3.500H15M18.500 14.500l-3.500-3"></path></g></svg>
<div style="left:1156px;top:90px;width:90px;height:18px;background:#666;border-radius:2px;"></div>
<div style="left:1185px;top:90px;width:1px;height:18px;background:#4a4a4a;"></div>
<div style="left:1216px;top:90px;width:1px;height:18px;background:#4a4a4a;"></div>
<svg style="left:1161px;top:93px;" width="20" height="12" viewBox="0 0 20 12"><rect x="1" y="1" width="17" height="2" fill="#222"></rect><rect x="1" y="5" width="7.500" height="6" fill="#222"></rect><rect x="10.500" y="5" width="7.500" height="6" fill="#222"></rect></svg>
<svg style="left:1192px;top:93px;" width="20" height="12" viewBox="0 0 20 12"><g fill="#333"><rect x="1" y="0" width="17" height="1.600"></rect><rect x="1" y="3.300" width="17" height="1.600"></rect><rect x="1" y="6.600" width="17" height="1.600"></rect><rect x="1" y="9.900" width="17" height="1.600"></rect></g></svg>
<svg style="left:1224px;top:92px;" width="16" height="14" viewBox="0 0 16 14"><rect x="8" y="0" width="6" height="14" fill="#222"></rect><path d="M6.500 3.500v7l-4-3.500z" fill="#444"></path></svg>
<span class="t" style="left: 256px; top: 118px; height: 16px; line-height: 16px; font-size: 13px; color: rgb(255, 255, 255); transform: scaleX(1.09);">ID:5</span>
<svg style="left:291.0px;top:113.5px;" width="25.0" height="25.0" viewBox="0 0 25.0 25.0"><circle cx="12.5" cy="12.5" r="11.5" fill="#2e9fe0" stroke="#fff" stroke-width="1.300"></circle><path d="M8.3 12.8l3 3 5.500-6" fill="none" stroke="#fff" stroke-width="2.300"></path></svg>
<svg style="left:316px;top:119px;" width="20" height="14" viewBox="0 0 20 14"><path d="M0 7l8-7v4.500h12v5H8V14z" fill="#c8c8c8"></path></svg>
<span class="t" style="left: 339px; top: 118px; height: 16px; line-height: 16px; font-size: 13px; color: rgb(255, 255, 255); transform: scaleX(0.972);">/◯◯機能 外部仕様書.docx/4 SW外部仕様/4.3</span>
<span class="t" style="left: 601px; top: 118px; height: 16px; line-height: 16px; font-size: 13px; color: rgb(255, 255, 255); transform: scaleX(0.867);">非機能要求に対する仕様</span>
<div style="left:1024px;top:118px;width:21px;height:16px;background:#8a8a8a;border-radius:2px;"></div>
<span class="t s" style="left: 1027px; top: 118.5px; height: 16px; line-height: 16px; font-size: 15px; color: rgb(17, 17, 17); font-weight: bold; transform: scaleX(1.014);">A</span>
<svg style="left:1038px;top:120px;" width="6" height="4" viewBox="0 0 6 4"><path d="M0 4h6L3 0z" fill="#111"></path></svg>
<div style="left:1049px;top:118px;width:21px;height:16px;background:#8a8a8a;border-radius:2px;"></div>
<span class="t s" style="left: 1054px; top: 121px; height: 14px; line-height: 14px; font-size: 11px; color: rgb(17, 17, 17); font-weight: bold; transform: scaleX(1.006);">A</span>
<svg style="left:1062px;top:121px;" width="6" height="4" viewBox="0 0 6 4"><path d="M0 0h6L3 4z" fill="#111"></path></svg>
<div style="left:1082px;top:118px;width:21px;height:16px;background:#8a8a8a;border-radius:2px;"></div>
<svg style="left:1086px;top:120px;" width="14" height="12" viewBox="0 0 14 12"><rect x=".6" y=".6" width="12.800" height="10.800" fill="none" stroke="#333" stroke-width="1.200"></rect><path d="M1 6h3l3 1.500L10 6h3" fill="none" stroke="#333" stroke-width="1"></path></svg>
<div style="left:1114px;top:115px;width:55px;height:22px;background:#4ea8e2;border-radius:3px 0 0 3px;"></div>
<span class="t" style="left: 1118px; top: 118px; height: 16px; line-height: 16px; font-size: 12px; color: rgb(255, 255, 255); transform: scaleX(0.87);">指摘･修正</span>
<div style="left:1170px;top:115px;width:38px;height:22px;background:#676767;"></div>
<span class="t" style="left: 1178px; top: 118px; height: 16px; line-height: 16px; font-size: 12px; color: rgb(255, 255, 255); transform: scaleX(0.958);">指摘</span>
<div style="left:1209px;top:115px;width:40px;height:22px;background:#676767;border-radius:0 3px 3px 0;"></div>
<span class="t" style="left: 1218px; top: 118px; height: 16px; line-height: 16px; font-size: 12px; color: rgb(255, 255, 255); transform: scaleX(0.958);">修正</span>
<div style="left:251px;top:331px;width:23px;height:50px;background:#444;border-radius:0 4px 4px 0;"></div>
<svg style="left:256px;top:344px;" width="9" height="24" viewBox="0 0 9 24"><path d="M8.500 0v24L0 12z" fill="#fff"></path></svg>
<div style="left:1231px;top:331px;width:22px;height:50px;background:#444;border-radius:4px 0 0 4px;"></div>
<svg style="left:1240px;top:344px;" width="9" height="24" viewBox="0 0 9 24"><path d="M0 0v24l8.500-12z" fill="#fff"></path></svg>
<div style="left:284px;top:151px;width:464px;height:277px;background:#b2b2b2;border-radius:5px;"></div>
<div class="clip" style="left:287px;top:155px;width:458px;height:268px;background:#fff;">
<div style="left:13px;top:0px;width:1px;height:268px;background:#111;"></div>
<div style="left:221px;top:15px;width:1px;height:240px;background:#111;"></div>
<div style="left:443px;top:0px;width:1px;height:268px;background:#111;"></div>
<div style="left:13px;top:15px;width:445px;height:1px;background:#111;"></div>
<div style="left:13px;top:135px;width:445px;height:1px;background:#111;"></div>
<div style="left:13px;top:255px;width:445px;height:1px;background:#111;"></div>
<span class="t s" style="left: 13px; top: -3.5px; height: 18px; line-height: 18px; font-size: 16px; color: rgb(42, 42, 42); -webkit-text-stroke: 0px; transform: scaleX(0.967);"><i>＜◯◯機能</i> ON/OFF <i>要求の判定＞</i></span>
<span class="t s" style="left: 22px; top: 17px; height: 18px; line-height: 18px; font-size: 15.5px; color: rgb(42, 42, 42); -webkit-text-stroke: 0px; transform: scaleX(1.084);">SP.ACC.001.01</span>
<span class="t s" style="left: 22px; top: 136px; height: 18px; line-height: 18px; font-size: 15.5px; color: rgb(42, 42, 42); -webkit-text-stroke: 0px; transform: scaleX(1.084);">SP.ACC.001.02</span>
<span class="t s" style="left: 230px; top: 17px; height: 18px; line-height: 18px; font-size: 15.5px; color: rgb(42, 42, 42); -webkit-text-stroke: 0px; transform: scaleX(1.047);">BBB <i>スイッチの信号が「オ</i></span>
<span class="t s" style="left: 230px; top: 36px; height: 18px; line-height: 18px; font-size: 15.5px; color: rgb(42, 42, 42); -webkit-text-stroke: 0px; transform: scaleX(0.982);"><i>ン」である状態が</i> 50[ms]<i>以上</i></span>
<span class="t s" style="left: 230px; top: 56px; height: 18px; line-height: 18px; font-size: 15.5px; color: rgb(42, 42, 42); -webkit-text-stroke: 0px; transform: scaleX(0.908);"><i>継続した後に「オフ」（</i>0.25[V]</span>
<span class="t s" style="left: 230px; top: 76px; height: 18px; line-height: 18px; font-size: 15.5px; color: rgb(42, 42, 42); -webkit-text-stroke: 0px; transform: scaleX(0.985);"><i>以下）に変化した場合、</i>BBB</span>
<span class="t s" style="left: 230px; top: 96px; height: 18px; line-height: 18px; font-size: 15.5px; color: rgb(42, 42, 42); -webkit-text-stroke: 0px; transform: scaleX(0.911);"><i>スイッチ押下判定を「オン」に</i></span>
<span class="t s" style="left: 230px; top: 115px; height: 18px; line-height: 18px; font-size: 15.5px; color: rgb(42, 42, 42); -webkit-text-stroke: 0px; transform: scaleX(0.792);"><i>する。</i></span>
<span class="t s" style="left: 230px; top: 136px; height: 18px; line-height: 18px; font-size: 15.5px; color: rgb(42, 42, 42); -webkit-text-stroke: 0px; transform: scaleX(1.047);">BBB <i>スイッチの信号が「オ</i></span>
<span class="t s" style="left: 230px; top: 156px; height: 18px; line-height: 18px; font-size: 15.5px; color: rgb(42, 42, 42); -webkit-text-stroke: 0px; transform: scaleX(0.848);"><i>フ」であるか、「オン」（</i>4.75[V]</span>
<span class="t s" style="left: 230px; top: 176px; height: 18px; line-height: 18px; font-size: 15.5px; color: rgb(42, 42, 42); -webkit-text-stroke: 0px; transform: scaleX(0.982);"><i>以上）が</i> 50[ms]<i>以上継続しな</i></span>
<span class="t s" style="left: 230px; top: 196px; height: 18px; line-height: 18px; font-size: 15.5px; color: rgb(42, 42, 42); -webkit-text-stroke: 0px; transform: scaleX(0.908);"><i>いで「オフ」（</i>0.25[V]<i>以下）に</i></span>
<span class="t s" style="left: 230px; top: 216px; height: 18px; line-height: 18px; font-size: 15.5px; color: rgb(42, 42, 42); -webkit-text-stroke: 0px; transform: scaleX(0.967);"><i>変化した場合は、</i>BBB <i>スイッ</i></span>
<span class="t s" style="left: 230px; top: 235px; height: 18px; line-height: 18px; font-size: 15.5px; color: rgb(42, 42, 42); -webkit-text-stroke: 0px; transform: scaleX(0.933);"><i>チ押下判定を「オフ」にする。</i></span>
<span class="t s" style="left: 16px; top: 257.5px; height: 18px; line-height: 18px; font-size: 16px; color: rgb(42, 42, 42); -webkit-text-stroke: 0px; transform: scaleX(1.032);"><i>＜</i>ON <i>条件判定＞</i></span>
</div>
<div style="left:541.2px;top:191.2px;width:20px;height:20px;background:#ef86b7;border-radius:50%;"></div>
<span class="t" style="left:541.2px;top:191.2px;height:20px;line-height:20px;font-size:12px;color:#fff;width:20px;text-align:center;-webkit-text-stroke:0;">1</span>
<div style="left:535.2px;top:314.2px;width:20px;height:20px;background:#ef86b7;border-radius:50%;"></div>
<span class="t" style="left:535.2px;top:314.2px;height:20px;line-height:20px;font-size:12px;color:#fff;width:20px;text-align:center;-webkit-text-stroke:0;">2</span>
<div style="left:289px;top:156px;width:68px;height:20px;background:#575757;border-radius:3px;"></div>
<span class="t" style="left: 299px; top: 158px; height: 16px; line-height: 16px; font-size: 12px; color: rgb(255, 255, 255); transform: scaleX(1);">指摘画像</span>
<div style="left:289px;top:401px;width:44px;height:22px;background:#1c1c1c;border-radius:3px;"></div>
<div style="left:292px;top:404px;width:18px;height:16px;background:#4ea8e2;border-radius:2px;"></div>
<span class="t" style="left:292px;top:404px;height:16px;line-height:16px;font-size:11px;color:#fff;width:18px;text-align:center;">1</span>
<div style="left:312px;top:404px;width:18px;height:16px;background:#8a8a8a;border-radius:2px;"></div>
<span class="t" style="left:312px;top:403.5px;height:16px;line-height:16px;font-size:13px;color:#fff;width:18px;text-align:center;">+</span>
<div style="left:758px;top:151px;width:464px;height:277px;background:#b2b2b2;border-radius:5px;"></div>
<div class="clip" style="left:761px;top:181px;width:458px;height:216px;background:#fff;">
<span class="t s" style="left: 10px; top: 10.5px; height: 18px; line-height: 18px; font-size: 15px; color: rgb(17, 17, 17); font-weight: bold; transform: scaleX(0.96);">4.1</span>
<span class="t s" style="left: 51px; top: 10.5px; height: 18px; line-height: 18px; font-size: 15.5px; color: rgb(42, 42, 42); -webkit-text-stroke: 0px; transform: scaleX(1.098);"><i>◯◯機能の始動</i></span>
<div style="left:9px;top:31px;width:449px;height:2px;background:#111;"></div>
<div style="left:2px;top:54px;width:456px;height:13px;background:#dcecf5;"></div>
<div style="left:2px;top:54px;width:456px;height:1px;background:#2a2a2a;"></div>
<div style="left:2px;top:67px;width:456px;height:1px;background:#2a2a2a;"></div>
<div style="left:112px;top:107px;width:456px;height:1px;background:#2a2a2a;"></div>
<div style="left:112px;top:198px;width:456px;height:1px;background:#2a2a2a;"></div>
<div style="left:112px;top:120px;width:346px;height:1px;background:#2a2a2a;"></div>
<div style="left:2px;top:54px;width:1px;height:162px;background:#2a2a2a;"></div>
<div style="left:112px;top:54px;width:1px;height:162px;background:#2a2a2a;"></div>
<div style="left:399px;top:54px;width:1px;height:162px;background:#2a2a2a;"></div>
<div style="left:251px;top:54px;width:1px;height:13px;background:#2a2a2a;"></div>
<div style="left:251px;top:120px;width:1px;height:97px;background:#2a2a2a;"></div>
<span class="t s" style="left: 9px; top: 54.5px; height: 13px; line-height: 13px; font-size: 10.5px; color: rgb(34, 34, 34); -webkit-text-stroke: 0px; transform: scaleX(0.84);"><i>要求</i> ID</span>
<span class="t s" style="left: 118px; top: 54.5px; height: 13px; line-height: 13px; font-size: 10.5px; color: rgb(34, 34, 34); -webkit-text-stroke: 0px; transform: scaleX(0.866);"><i>外部仕様</i> ID</span>
<span class="t s" style="left: 257px; top: 54.5px; height: 13px; line-height: 13px; font-size: 10.5px; color: rgb(34, 34, 34); -webkit-text-stroke: 0px; transform: scaleX(0.909);"><i>内容</i></span>
<span class="t s" style="left: 405px; top: 54.5px; height: 13px; line-height: 13px; font-size: 10.5px; color: rgb(34, 34, 34); -webkit-text-stroke: 0px; transform: scaleX(0.848);"><i>その他</i></span>
<span class="t s" style="left: 9px; top: 67.5px; height: 13px; line-height: 13px; font-size: 10.5px; color: rgb(34, 34, 34); -webkit-text-stroke: 0px; transform: scaleX(1.045);">ACC.01.01</span>
<span class="t s" style="left: 119px; top: 67.5px; height: 13px; line-height: 13px; font-size: 10.5px; color: rgb(34, 34, 34); -webkit-text-stroke: 0px; transform: scaleX(0.92);"><i>◯◯機能が</i> OFF <i>の時にドライバが◯◯機能の</i> ON <i>を要求した</i></span>
<span class="t s" style="left: 119px; top: 80.5px; height: 13px; line-height: 13px; font-size: 10.5px; color: rgb(34, 34, 34); -webkit-text-stroke: 0px; transform: scaleX(0.927);"><i>場合、◯◯機能を</i> ON <i>できる条件が成立していることを判定</i></span>
<span class="t s" style="left: 119px; top: 93.5px; height: 13px; line-height: 13px; font-size: 10.5px; color: rgb(34, 34, 34); -webkit-text-stroke: 0px; transform: scaleX(0.884);"><i>し、◯◯機能を</i> ON <i>にする。</i></span>
<span class="t s" style="left: 119px; top: 107.5px; height: 13px; line-height: 13px; font-size: 10.5px; color: rgb(34, 34, 34); -webkit-text-stroke: 0px; transform: scaleX(0.868);"><i>＜◯◯機能</i> ON/OFF <i>要求の判定＞</i></span>
<span class="t s" style="left: 119px; top: 120.5px; height: 13px; line-height: 13px; font-size: 10.5px; color: rgb(34, 34, 34); -webkit-text-stroke: 0px; transform: scaleX(1.057);">SP.ACC.001.01</span>
<span class="t s" style="left: 119px; top: 197.5px; height: 13px; line-height: 13px; font-size: 10.5px; color: rgb(34, 34, 34); -webkit-text-stroke: 0px; transform: scaleX(1.057);">SP.ACC.001.02</span>
<div style="left:249.5px;top:119.5px;width:153.5px;height:28.5px;background:#fdeef5;border:2px solid #ee62b0;"></div>
<div style="left:249.5px;top:197.5px;width:153.5px;height:15px;background:#fdeef5;border:2px solid #ee62b0;"></div>
<span class="t s" style="left: 257px; top: 120.5px; height: 13px; line-height: 13px; font-size: 10.5px; color: rgb(34, 34, 34); -webkit-text-stroke: 0px; transform: scaleX(0.88);">BBB <i>スイッチの信号が「オン」</i></span>
<span class="t s" style="left: 257px; top: 133.5px; height: 13px; line-height: 13px; font-size: 10.5px; color: rgb(34, 34, 34); -webkit-text-stroke: 0px; transform: scaleX(0.937);"><i>（</i>4.75[V]<i>以上）である状態が</i></span>
<span class="t s" style="left: 257px; top: 146.5px; height: 13px; line-height: 13px; font-size: 10.5px; color: rgb(34, 34, 34); -webkit-text-stroke: 0px; transform: scaleX(0.98);">50[ms]<i>以上継続した後に「オ</i></span>
<span class="t s" style="left: 257px; top: 159.5px; height: 13px; line-height: 13px; font-size: 10.5px; color: rgb(34, 34, 34); -webkit-text-stroke: 0px; transform: scaleX(0.89);"><i>フ」（</i>0.25[V]<i>以下）に変化した</i></span>
<span class="t s" style="left: 257px; top: 171.5px; height: 13px; line-height: 13px; font-size: 10.5px; color: rgb(34, 34, 34); -webkit-text-stroke: 0px; transform: scaleX(0.947);"><i>場合、</i>BBB <i>スイッチ押下判定</i></span>
<span class="t s" style="left: 257px; top: 184.5px; height: 13px; line-height: 13px; font-size: 10.5px; color: rgb(34, 34, 34); -webkit-text-stroke: 0px; transform: scaleX(0.848);"><i>を「オン」にする。</i></span>
<span class="t s" style="left: 257px; top: 197.5px; height: 13px; line-height: 13px; font-size: 10.5px; color: rgb(34, 34, 34); -webkit-text-stroke: 0px; transform: scaleX(0.88);">BBB <i>スイッチの信号が「オフ」</i></span>
<span class="t s" style="left: 257px; top: 210.5px; height: 13px; line-height: 13px; font-size: 10.5px; color: rgb(34, 34, 34); -webkit-text-stroke: 0px; transform: scaleX(0.89);"><i>であるか、「オン」（</i>4.75[V]<i>以</i></span>
</div>
<div style="left:763px;top:156px;width:68px;height:20px;background:#575757;border-radius:3px;"></div>
<span class="t" style="left: 773px; top: 158px; height: 16px; line-height: 16px; font-size: 12px; color: rgb(255, 255, 255); transform: scaleX(1);">修正画像</span>
<div style="left:763px;top:401px;width:44px;height:22px;background:#1c1c1c;border-radius:3px;"></div>
<div style="left:766px;top:404px;width:19px;height:16px;background:#4ea8e2;border-radius:2px;"></div>
<span class="t" style="left:766px;top:404px;height:16px;line-height:16px;font-size:10px;color:#fff;width:19px;text-align:center;">1-1</span>
<div style="left:787px;top:404px;width:18px;height:16px;background:#8a8a8a;border-radius:2px;"></div>
<span class="t" style="left:787px;top:403.5px;height:16px;line-height:16px;font-size:13px;color:#fff;width:18px;text-align:center;">+</span>
<div style="left:502px;top:431px;width:3px;height:3px;background:#666;border-radius:1.5px;"></div>
<div style="left:509px;top:431px;width:3px;height:3px;background:#666;border-radius:1.5px;"></div>
<div style="left:516px;top:431px;width:3px;height:3px;background:#666;border-radius:1.5px;"></div>
<div style="left:987px;top:431px;width:3px;height:3px;background:#666;border-radius:1.5px;"></div>
<div style="left:994px;top:431px;width:3px;height:3px;background:#666;border-radius:1.5px;"></div>
<div style="left:1001px;top:431px;width:3px;height:3px;background:#666;border-radius:1.5px;"></div>
<div style="left:752px;top:321px;width:3px;height:3px;background:#6a6a6a;border-radius:1.5px;"></div>
<div style="left:752px;top:328px;width:3px;height:3px;background:#6a6a6a;border-radius:1.5px;"></div>
<div style="left:752px;top:335px;width:3px;height:3px;background:#6a6a6a;border-radius:1.5px;"></div>
<div style="left:752px;top:342px;width:3px;height:3px;background:#6a6a6a;border-radius:1.5px;"></div>
<div style="left:752px;top:349px;width:3px;height:3px;background:#6a6a6a;border-radius:1.5px;"></div>
<div style="left:284px;top:437px;width:464px;height:96px;background:#2a2a2a;border:1px solid #474747;border-radius:3px;"></div>
<span class="t" style="left: 288px; top: 440px; height: 16px; line-height: 16px; font-size: 13px; color: rgb(255, 255, 255); transform: scaleX(0.78);">それぞれの状態と見なす条件を明記すること。</span>
<div style="left:758px;top:437px;width:464px;height:96px;background:#2a2a2a;border:1px solid #474747;border-radius:3px;"></div>
<span class="t" style="left: 762px; top: 440px; height: 16px; line-height: 16px; font-size: 13px; color: rgb(255, 255, 255); transform: scaleX(0.769);">条件を追記しました。</span>
<div style="left:284px;top:538px;width:107px;height:27px;background:#222;border-radius:4px;"></div>
<span class="t" style="left: 291px; top: 544px; height: 16px; line-height: 16px; font-size: 14px; color: rgb(255, 255, 255); transform: scaleX(0.977);">+</span>
<span class="t" style="left: 303.5px; top: 544px; height: 16px; line-height: 16px; font-size: 13px; color: rgb(255, 255, 255); transform: scaleX(0.784);">関連リンクを追加</span>
<div style="left:758px;top:538px;width:107px;height:27px;background:#222;border-radius:4px;"></div>
<span class="t" style="left: 765px; top: 544px; height: 16px; line-height: 16px; font-size: 14px; color: rgb(255, 255, 255); transform: scaleX(0.977);">+</span>
<span class="t" style="left: 777.5px; top: 544px; height: 16px; line-height: 16px; font-size: 13px; color: rgb(255, 255, 255); transform: scaleX(0.784);">関連リンクを追加</span>
<div style="left:284px;top:573px;width:938px;height:66px;background:#333333;border-radius:5px;"></div>
<div style="left:744px;top:570.5px;width:3px;height:3px;background:#666;border-radius:1.5px;"></div>
<div style="left:751px;top:570.5px;width:3px;height:3px;background:#666;border-radius:1.5px;"></div>
<div style="left:758px;top:570.5px;width:3px;height:3px;background:#666;border-radius:1.5px;"></div>
<span class="t" style="left: 294px; top: 584px; height: 16px; line-height: 16px; font-size: 12px; color: rgb(255, 255, 255); transform: scaleX(1.017);">報告者:</span>
<div style="left:339px;top:580px;width:90px;height:23px;background:#2b2b2b;border:1px solid #5a5a5a;border-radius:4px;"></div>
<div style="left:410px;top:581px;width:18px;height:21px;background:#0e0e0e;border-radius:0 3px 3px 0;"></div>
<svg style="left:416px;top:589px;" width="6" height="5" viewBox="0 0 6 5"><path d="M0 0h6L3 5z" fill="#707070"></path></svg>
<span class="t" style="left: 344px; top: 583.5px; height: 16px; line-height: 16px; font-size: 12px; color: rgb(255, 255, 255); transform: scaleX(1.032);">植田 信貴</span>
<span class="t" style="left: 439px; top: 584px; height: 16px; line-height: 16px; font-size: 12px; color: rgb(255, 255, 255); transform: scaleX(1.042);">修正者:</span>
<div style="left:484px;top:580px;width:90px;height:23px;background:#2b2b2b;border:1px solid #5a5a5a;border-radius:4px;"></div>
<div style="left:555px;top:581px;width:18px;height:21px;background:#0e0e0e;border-radius:0 3px 3px 0;"></div>
<svg style="left:561px;top:589px;" width="6" height="5" viewBox="0 0 6 5"><path d="M0 0h6L3 5z" fill="#707070"></path></svg>
<span class="t" style="left: 489px; top: 583.5px; height: 16px; line-height: 16px; font-size: 12px; color: rgb(255, 255, 255); transform: scaleX(1.032);">岡本 直哉</span>
<span class="t" style="left: 584px; top: 584px; height: 16px; line-height: 16px; font-size: 12px; color: rgb(255, 255, 255); transform: scaleX(1.017);">確認者:</span>
<div style="left:629px;top:580px;width:90px;height:23px;background:#2b2b2b;border:1px solid #5a5a5a;border-radius:4px;"></div>
<div style="left:700px;top:581px;width:18px;height:21px;background:#0e0e0e;border-radius:0 3px 3px 0;"></div>
<svg style="left:706px;top:589px;" width="6" height="5" viewBox="0 0 6 5"><path d="M0 0h6L3 5z" fill="#707070"></path></svg>
<span class="t" style="left: 634px; top: 583.5px; height: 16px; line-height: 16px; font-size: 12px; color: rgb(255, 255, 255); transform: scaleX(1.032);">植田 信貴</span>
<div style="left:294.5px;top:615.0px;width:13.8px;height:13.8px;background:#f2f2f2;border-radius:3px;"></div>
<div style="left:297.26px;top:620.9px;width:8.28px;height:2.5px;background:#aaa;border-radius:1px;"></div>
<svg style="left:311.5px;top:615.2px;" width="13" height="13" viewBox="0 0 15 15"><polygon points="7.500,0.800 9.500,5.600 14.700,6 10.700,9.400 12,14.500 7.500,11.700 3,14.500 4.300,9.400 0.300,6 5.500,5.600" fill="#ffb300" stroke="#c77a00" stroke-width=".7"></polygon></svg>
<svg style="left:324.8px;top:615.2px;" width="13" height="13" viewBox="0 0 15 15"><polygon points="7.500,0.800 9.500,5.600 14.700,6 10.700,9.400 12,14.500 7.500,11.700 3,14.500 4.300,9.400 0.300,6 5.500,5.600" fill="#ffb300" stroke="#c77a00" stroke-width=".7"></polygon></svg>
<svg style="left:338.3px;top:615.2px;" width="13" height="13" viewBox="0 0 15 15"><polygon points="7.500,0.800 9.500,5.600 14.700,6 10.700,9.400 12,14.500 7.500,11.700 3,14.500 4.300,9.400 0.300,6 5.500,5.600" fill="none" stroke="#ccc" stroke-width="1.100"></polygon></svg>
<svg style="left:357.9px;top:613.1999999999999px;" width="15.2" height="15.2" viewBox="0 0 15.2 15.2"><circle cx="7.6" cy="7.6" r="7.6" fill="#f0323c"></circle><rect x="2.6599999999999997" y="5.8999999999999995" width="9.879999999999999" height="3.400" fill="#fff"></rect></svg>
<span class="t" style="left: 383px; top: 616px; height: 16px; line-height: 16px; font-size: 12px; color: rgb(255, 255, 255); transform: scaleX(1.024);">期日:</span>
<span class="t" style="left: 420px; top: 616px; height: 16px; line-height: 16px; font-size: 12px; color: rgb(255, 255, 255); transform: scaleX(1.183);">2019/11/19</span>
<span class="t" style="left: 497px; top: 616px; height: 16px; line-height: 16px; font-size: 12px; color: rgb(255, 255, 255); transform: scaleX(1.017);">修正日:</span>
<span class="t" style="left: 546px; top: 616px; height: 16px; line-height: 16px; font-size: 12px; color: rgb(255, 255, 255); transform: scaleX(1.183);">2019/11/04</span>
<span class="t" style="left: 623px; top: 616px; height: 16px; line-height: 16px; font-size: 12px; color: rgb(255, 255, 255); transform: scaleX(1.017);">確認日:</span>
<span class="t" style="left: 672px; top: 616px; height: 16px; line-height: 16px; font-size: 12px; color: rgb(255, 255, 255); transform: scaleX(1.183);">2019/11/04</span>
<svg style="left:751px;top:583px;" width="5" height="8" viewBox="0 0 5 8"><path d="M4.700 0v8.200L0 4.100z" fill="#8a8a8a"></path></svg>
<div style="left:841px;top:578px;width:375px;height:57px;background:#333;border:1px solid #4c4c4c;border-radius:2px;"></div>
<div style="left:764px;top:578px;width:78px;height:23px;background:#575757;border:1px solid #b4b4b4;border-radius:3px 0 0 3px;"></div>
<span class="t" style="left: 785px; top: 581.5px; height: 16px; line-height: 16px; font-size: 12px; color: rgb(255, 255, 255); transform: scaleX(0.771);">コメント</span>
<div style="left:764px;top:601.5px;width:77px;height:22.5px;background:#262626;border:1px solid #5a5a5a;border-radius:3px 0 0 3px;"></div>
<span class="t" style="left: 770px; top: 604.5px; height: 16px; line-height: 16px; font-size: 12px; color: rgb(255, 255, 255); transform: scaleX(0.903);">差し戻し理由</span>
<span class="t" style="left: 845px; top: 581px; height: 16px; line-height: 16px; font-size: 12px; color: rgb(90, 90, 90); transform: scaleX(0.738);">コメントを記入してください。</span>
<svg style="left:1199px;top:651px;" width="13" height="12" viewBox="0 0 13 12"><path d="M2.500 2h7.500v5.500H5.500" fill="none" stroke="#686868" stroke-width="2.600"></path><path d="M6.500 3.500v8L0 7.500z" fill="#686868"></path></svg>
<span class="t" style="left: 1215px; top: 649px; height: 16px; line-height: 16px; font-size: 12px; color: rgb(255, 255, 255); transform: scaleX(0.958);">戻る</span>
<svg style="left:258px;top:652.5px;" width="9" height="7" viewBox="0 0 9 7"><path d="M0 0h8.500L4.200 6.500z" fill="#8a8a8a"></path></svg>
<div class="clip" style="left:251px;top:668px;width:1002px;height:82px;">
<div style="left:3px;top:3px;width:75px;height:75px;background:#666666;border:3px solid #7e7e7e;border-radius:5px;"></div>
<div style="left:9px;top:27px;width:63px;height:27px;background:#fff;"></div>
<div style="left:12px;top:31px;width:10px;height:5px;border:1px solid #ccc;"></div>
<div style="left:12px;top:37px;width:10px;height:5px;border:1px solid #ccc;"></div>
<div style="left:12px;top:44px;width:10px;height:6px;border:1px solid #ccc;"></div>
<div style="left:58px;top:31px;width:10px;height:5px;border:1px solid #ccc;"></div>
<div style="left:58px;top:37px;width:10px;height:5px;border:1px solid #ccc;"></div>
<div style="left:58px;top:44px;width:10px;height:6px;border:1px solid #ccc;"></div>
<div style="left:28px;top:31px;width:24px;height:14px;border:1px solid #d8d8d8;border-top:0;"></div>
<div style="left:24px;top:42px;width:5px;height:5px;background:#f8c0dc;"></div>
<div style="left:28px;top:34px;width:1.5px;height:9px;background:#f070b0;"></div>
<div style="left:30px;top:47px;width:21px;height:1px;background:#bcd8ee;"></div>
<div style="left:36px;top:52px;width:17px;height:2px;background:repeating-linear-gradient(180deg,#aaa 0,#aaa 1px,transparent 1px,transparent 3px);opacity:.75;"></div>
<div style="left:12px;top:28px;width:45px;height:1px;background:repeating-linear-gradient(180deg,#ccc 0,#ccc 1px,transparent 1px,transparent 3px);opacity:.75;"></div>
<span class="t s" style="left: 10px; top: 58.7px; height: 16px; line-height: 16px; font-size: 14px; color: rgb(238, 238, 238); -webkit-text-stroke: 0.15px rgb(238, 238, 238); transform: scaleX(1.041);">ID:24</span>
<svg style="left:7.000000000000011px;top:7.900000000000045px;" width="20.6" height="20.6" viewBox="0 0 20.6 20.6"><circle cx="10.3" cy="10.3" r="9.3" fill="#2e9fe0" stroke="#fff" stroke-width="1.300"></circle><path d="M6.1000000000000005 10.600000000000001l3 3 5.500-6" fill="none" stroke="#fff" stroke-width="2.300"></path></svg>
<div style="left:84px;top:3px;width:75px;height:75px;background:#666666;border:3px solid #7e7e7e;border-radius:5px;"></div>
<div style="left:93px;top:9px;width:57px;height:63px;background:#fff;"></div>
<div style="left:97px;top:11px;width:50px;height:3px;background:#d5e6f2;"></div>
<div style="left:97px;top:29px;width:50px;height:1px;background:#555;"></div>
<div style="left:97px;top:38.5px;width:50px;height:1px;background:#555;"></div>
<div style="left:97px;top:47.5px;width:50px;height:1px;background:#555;"></div>
<div style="left:97px;top:56.5px;width:50px;height:1px;background:#555;"></div>
<div style="left:97px;top:62px;width:50px;height:1px;background:#555;"></div>
<div style="left:97px;top:66.5px;width:50px;height:1px;background:#555;"></div>
<div style="left:123px;top:10px;width:1px;height:62px;background:#444;"></div>
<div style="left:147px;top:10px;width:1px;height:62px;background:#666;"></div>
<div style="left:99px;top:16px;width:20px;height:5px;background:repeating-linear-gradient(180deg,#777 0,#777 1px,transparent 1px,transparent 3px);opacity:.75;"></div>
<div style="left:99px;top:31px;width:20px;height:5px;background:repeating-linear-gradient(180deg,#777 0,#777 1px,transparent 1px,transparent 3px);opacity:.75;"></div>
<div style="left:99px;top:40px;width:20px;height:5px;background:repeating-linear-gradient(180deg,#777 0,#777 1px,transparent 1px,transparent 3px);opacity:.75;"></div>
<div style="left:99px;top:49px;width:20px;height:5px;background:repeating-linear-gradient(180deg,#777 0,#777 1px,transparent 1px,transparent 3px);opacity:.75;"></div>
<div style="left:126px;top:16px;width:14px;height:2px;background:repeating-linear-gradient(180deg,#777 0,#777 1px,transparent 1px,transparent 3px);opacity:.75;"></div>
<div style="left:126px;top:31px;width:14px;height:2px;background:repeating-linear-gradient(180deg,#777 0,#777 1px,transparent 1px,transparent 3px);opacity:.75;"></div>
<div style="left:126px;top:40px;width:14px;height:2px;background:repeating-linear-gradient(180deg,#777 0,#777 1px,transparent 1px,transparent 3px);opacity:.75;"></div>
<div style="left:126px;top:49px;width:14px;height:2px;background:repeating-linear-gradient(180deg,#777 0,#777 1px,transparent 1px,transparent 3px);opacity:.75;"></div>
<div style="left:126px;top:59px;width:14px;height:2px;background:repeating-linear-gradient(180deg,#777 0,#777 1px,transparent 1px,transparent 3px);opacity:.75;"></div>
<div style="left:126px;top:64px;width:14px;height:2px;background:repeating-linear-gradient(180deg,#777 0,#777 1px,transparent 1px,transparent 3px);opacity:.75;"></div>
<div style="left:126px;top:69px;width:14px;height:2px;background:repeating-linear-gradient(180deg,#777 0,#777 1px,transparent 1px,transparent 3px);opacity:.75;"></div>
<div style="left:125px;top:33px;width:17px;height:3px;background:#fbe4ef;border:.5px solid #e88cc0;"></div>
<div style="left:86.5px;top:57.5px;width:34px;height:18px;background:#666666;"></div>
<span class="t s" style="left: 91px; top: 58.7px; height: 16px; line-height: 16px; font-size: 14px; color: rgb(238, 238, 238); -webkit-text-stroke: 0.15px rgb(238, 238, 238); transform: scaleX(1.013);">ID:3</span>
<svg style="left:88.00000000000001px;top:7.900000000000045px;" width="20.6" height="20.6" viewBox="0 0 20.6 20.6"><circle cx="10.3" cy="10.3" r="9.3" fill="#1e9e50" stroke="#fff" stroke-width="1.300"></circle><path d="M5.800000000000001 14.8l1-3 6.500-6.500 2 2-6.500 6.500z" fill="#fff"></path></svg>
<div style="left:165px;top:3px;width:75px;height:75px;background:#666666;border:3px solid #7e7e7e;border-radius:5px;"></div>
<div style="left:177px;top:9px;width:54px;height:63px;background:#fff;"></div>
<div style="left:181px;top:11px;width:48px;height:3px;background:#d5e6f2;"></div>
<div style="left:181px;top:29px;width:48px;height:1px;background:#555;"></div>
<div style="left:181px;top:38.5px;width:48px;height:1px;background:#555;"></div>
<div style="left:181px;top:47.5px;width:48px;height:1px;background:#555;"></div>
<div style="left:181px;top:56.5px;width:48px;height:1px;background:#555;"></div>
<div style="left:181px;top:62px;width:48px;height:1px;background:#555;"></div>
<div style="left:181px;top:66.5px;width:48px;height:1px;background:#555;"></div>
<div style="left:205px;top:10px;width:1px;height:62px;background:#444;"></div>
<div style="left:229px;top:10px;width:1px;height:62px;background:#666;"></div>
<div style="left:183px;top:16px;width:18px;height:5px;background:repeating-linear-gradient(180deg,#777 0,#777 1px,transparent 1px,transparent 3px);opacity:.75;"></div>
<div style="left:183px;top:31px;width:18px;height:5px;background:repeating-linear-gradient(180deg,#777 0,#777 1px,transparent 1px,transparent 3px);opacity:.75;"></div>
<div style="left:183px;top:40px;width:18px;height:5px;background:repeating-linear-gradient(180deg,#777 0,#777 1px,transparent 1px,transparent 3px);opacity:.75;"></div>
<div style="left:183px;top:49px;width:18px;height:5px;background:repeating-linear-gradient(180deg,#777 0,#777 1px,transparent 1px,transparent 3px);opacity:.75;"></div>
<div style="left:208px;top:16px;width:14px;height:2px;background:repeating-linear-gradient(180deg,#777 0,#777 1px,transparent 1px,transparent 3px);opacity:.75;"></div>
<div style="left:208px;top:31px;width:14px;height:2px;background:repeating-linear-gradient(180deg,#777 0,#777 1px,transparent 1px,transparent 3px);opacity:.75;"></div>
<div style="left:208px;top:40px;width:14px;height:2px;background:repeating-linear-gradient(180deg,#777 0,#777 1px,transparent 1px,transparent 3px);opacity:.75;"></div>
<div style="left:208px;top:49px;width:14px;height:2px;background:repeating-linear-gradient(180deg,#777 0,#777 1px,transparent 1px,transparent 3px);opacity:.75;"></div>
<div style="left:208px;top:59px;width:14px;height:2px;background:repeating-linear-gradient(180deg,#777 0,#777 1px,transparent 1px,transparent 3px);opacity:.75;"></div>
<div style="left:208px;top:64px;width:14px;height:2px;background:repeating-linear-gradient(180deg,#777 0,#777 1px,transparent 1px,transparent 3px);opacity:.75;"></div>
<div style="left:208px;top:69px;width:14px;height:2px;background:repeating-linear-gradient(180deg,#777 0,#777 1px,transparent 1px,transparent 3px);opacity:.75;"></div>
<div style="left:217px;top:39px;width:3px;height:3px;background:#f080c0;border-radius:2px;"></div>
<div style="left:217px;top:49px;width:3px;height:3px;background:#f080c0;border-radius:2px;"></div>
<div style="left:167.5px;top:57.5px;width:42px;height:18px;background:#666666;"></div>
<span class="t s" style="left: 172px; top: 58.7px; height: 16px; line-height: 16px; font-size: 14px; color: rgb(238, 238, 238); -webkit-text-stroke: 0.15px rgb(238, 238, 238); transform: scaleX(1.041);">ID:16</span>
<svg style="left:169.0px;top:7.900000000000045px;" width="20.6" height="20.6" viewBox="0 0 20.6 20.6"><circle cx="10.3" cy="10.3" r="9.3" fill="#f0323c" stroke="#fff" stroke-width="1.300"></circle><path d="M6.500000000000001 6.500000000000001l7.600 7.600M14.100000000000001 6.500000000000001l-7.600 7.600" stroke="#fff" stroke-width="2.200"></path></svg>
<div style="left:246px;top:3px;width:75px;height:75px;background:#666666;border:3px solid #7e7e7e;border-radius:5px;"></div>
<div style="left:252px;top:22px;width:63px;height:38px;background:#fff;"></div>
<div style="left:253px;top:23px;width:31px;height:2px;background:#d5e6f2;"></div>
<div style="left:254px;top:25px;width:29px;height:32px;background:repeating-linear-gradient(180deg,#999 0,#999 1px,transparent 1px,transparent 3px);opacity:.75;"></div>
<div style="left:253px;top:27px;width:31px;height:1px;background:#888;"></div>
<div style="left:253px;top:33px;width:31px;height:1px;background:#888;"></div>
<div style="left:253px;top:44px;width:31px;height:1px;background:#888;"></div>
<div style="left:253px;top:48px;width:31px;height:1px;background:#888;"></div>
<div style="left:253px;top:52px;width:31px;height:1px;background:#888;"></div>
<div style="left:253px;top:56px;width:31px;height:1px;background:#888;"></div>
<div style="left:284px;top:23px;width:1px;height:34px;background:#999;"></div>
<div style="left:268px;top:23px;width:1px;height:34px;background:#bbb;"></div>
<div style="left:248.5px;top:57.5px;width:42px;height:18px;background:#666666;"></div>
<span class="t s" style="left: 253px; top: 58.7px; height: 16px; line-height: 16px; font-size: 14px; color: rgb(238, 238, 238); -webkit-text-stroke: 0.15px rgb(238, 238, 238); transform: scaleX(1.041);">ID:17</span>
<svg style="left:250.0px;top:7.900000000000045px;" width="20.6" height="20.6" viewBox="0 0 20.6 20.6"><circle cx="10.3" cy="10.3" r="9.3" fill="#f0323c" stroke="#fff" stroke-width="1.300"></circle><path d="M6.500000000000001 6.500000000000001l7.600 7.600M14.100000000000001 6.500000000000001l-7.600 7.600" stroke="#fff" stroke-width="2.200"></path></svg>
<div style="left:327px;top:3px;width:75px;height:75px;background:#666666;border:3px solid #7e7e7e;border-radius:5px;"></div>
<div style="left:333px;top:22.5px;width:63px;height:35px;background:#fff;"></div>
<div style="left:335px;top:24px;width:33px;height:2px;background:#d5e6f2;"></div>
<div style="left:336px;top:26px;width:30px;height:13px;background:repeating-linear-gradient(180deg,#888 0,#888 1px,transparent 1px,transparent 3px);opacity:.75;"></div>
<div style="left:335px;top:24px;width:33px;height:1px;background:#666;"></div>
<div style="left:335px;top:29px;width:33px;height:1px;background:#666;"></div>
<div style="left:335px;top:34px;width:33px;height:1px;background:#666;"></div>
<div style="left:335px;top:39px;width:33px;height:1px;background:#666;"></div>
<div style="left:368px;top:24px;width:1px;height:15px;background:#888;"></div>
<div style="left:334px;top:41px;width:34px;height:4px;border:1px dashed #f0a0d0;border-radius:3px;border-top:0;"></div>
<span class="t s" style="left: 334px; top: 58.7px; height: 16px; line-height: 16px; font-size: 14px; color: rgb(238, 238, 238); -webkit-text-stroke: 0.15px rgb(238, 238, 238); transform: scaleX(1.041);">ID:18</span>
<svg style="left:330.99999999999994px;top:7.900000000000045px;" width="20.6" height="20.6" viewBox="0 0 20.6 20.6"><circle cx="10.3" cy="10.3" r="9.3" fill="#f0323c" stroke="#fff" stroke-width="1.300"></circle><path d="M6.500000000000001 6.500000000000001l7.600 7.600M14.100000000000001 6.500000000000001l-7.600 7.600" stroke="#fff" stroke-width="2.200"></path></svg>
<div style="left:408px;top:3px;width:75px;height:75px;background:#666666;border:3px solid #7e7e7e;border-radius:5px;"></div>
<div style="left:414px;top:33px;width:63.5px;height:15px;background:#fff;"></div>
<div style="left:415px;top:34px;width:62px;height:2px;background:#bcd8ee;"></div>
<div style="left:417px;top:36px;width:58px;height:11px;background:repeating-linear-gradient(180deg,#666 0,#666 1px,transparent 1px,transparent 3px);opacity:.75;"></div>
<div style="left:415px;top:46px;width:62px;height:1px;background:#555;"></div>
<div style="left:416px;top:34px;width:1px;height:13px;background:#555;"></div>
<div style="left:476px;top:34px;width:1px;height:13px;background:#888;"></div>
<span class="t s" style="left: 415px; top: 58.7px; height: 16px; line-height: 16px; font-size: 14px; color: rgb(238, 238, 238); -webkit-text-stroke: 0.15px rgb(238, 238, 238); transform: scaleX(1.041);">ID:20</span>
<svg style="left:411.99999999999994px;top:7.900000000000045px;" width="20.6" height="20.6" viewBox="0 0 20.6 20.6"><circle cx="10.3" cy="10.3" r="9.3" fill="#f0323c" stroke="#fff" stroke-width="1.300"></circle><path d="M6.500000000000001 6.500000000000001l7.600 7.600M14.100000000000001 6.500000000000001l-7.600 7.600" stroke="#fff" stroke-width="2.200"></path></svg>
<div style="left:489px;top:3px;width:75px;height:75px;background:#666666;border:3px solid #7e7e7e;border-radius:5px;"></div>
<div style="left:495px;top:24px;width:63px;height:32px;background:#fff;"></div>
<div style="left:504px;top:26px;width:50px;height:29px;background:repeating-linear-gradient(180deg,#555 0,#555 1px,transparent 1px,transparent 4px);opacity:.75;"></div>
<div style="left:506px;top:27px;width:46px;height:29px;background:repeating-linear-gradient(180deg,#888 0,#888 1px,transparent 1px,transparent 4px);opacity:.75;"></div>
<div style="left:555px;top:25px;width:1px;height:31px;background:#aaa;"></div>
<span class="t s" style="left: 496px; top: 58.7px; height: 16px; line-height: 16px; font-size: 14px; color: rgb(238, 238, 238); -webkit-text-stroke: 0.15px rgb(238, 238, 238); transform: scaleX(1.041);">ID:21</span>
<svg style="left:492.99999999999994px;top:7.900000000000045px;" width="20.6" height="20.6" viewBox="0 0 20.6 20.6"><circle cx="10.3" cy="10.3" r="9.3" fill="#f0323c" stroke="#fff" stroke-width="1.300"></circle><path d="M6.500000000000001 6.500000000000001l7.600 7.600M14.100000000000001 6.500000000000001l-7.600 7.600" stroke="#fff" stroke-width="2.200"></path></svg>
<div style="left:570px;top:3px;width:75px;height:75px;background:#666666;border:3px solid #7e7e7e;border-radius:5px;"></div>
<div style="left:576px;top:25px;width:63px;height:31px;background:#fff;"></div>
<div style="left:578px;top:27px;width:58px;height:3px;background:repeating-linear-gradient(180deg,#777 0,#777 1px,transparent 1px,transparent 3px);opacity:.75;"></div>
<div style="left:608px;top:32px;width:29px;height:23px;background:repeating-linear-gradient(180deg,#666 0,#666 1px,transparent 1px,transparent 3px);opacity:.75;"></div>
<div style="left:614px;top:44px;width:8px;height:1px;background:#4060e0;"></div>
<span class="t s" style="left: 577px; top: 58.7px; height: 16px; line-height: 16px; font-size: 14px; color: rgb(238, 238, 238); -webkit-text-stroke: 0.15px rgb(238, 238, 238); transform: scaleX(1.041);">ID:22</span>
<svg style="left:574.0px;top:7.900000000000045px;" width="20.6" height="20.6" viewBox="0 0 20.6 20.6"><circle cx="10.3" cy="10.3" r="9.3" fill="#f0323c" stroke="#fff" stroke-width="1.300"></circle><path d="M6.500000000000001 6.500000000000001l7.600 7.600M14.100000000000001 6.500000000000001l-7.600 7.600" stroke="#fff" stroke-width="2.200"></path></svg>
<div style="left:651px;top:3px;width:75px;height:75px;background:#666666;border:3px solid #7e7e7e;border-radius:5px;"></div>
<div style="left:656.5px;top:35px;width:63.5px;height:11px;background:#fff;"></div>
<div style="left:694px;top:36px;width:19px;height:9px;background:repeating-linear-gradient(180deg,#777 0,#777 1px,transparent 1px,transparent 3px);opacity:.75;"></div>
<div style="left:693px;top:35px;width:1px;height:10px;background:#999;"></div>
<div style="left:714px;top:35px;width:1px;height:10px;background:#999;"></div>
<div style="left:673px;top:43px;width:30px;height:1px;background:#f0a0d0;"></div>
<div style="left:660px;top:43px;width:8px;height:2px;background:repeating-linear-gradient(180deg,#aaa 0,#aaa 1px,transparent 1px,transparent 3px);opacity:.75;"></div>
<span class="t s" style="left: 658px; top: 58.7px; height: 16px; line-height: 16px; font-size: 14px; color: rgb(238, 238, 238); -webkit-text-stroke: 0.15px rgb(238, 238, 238); transform: scaleX(1.041);">ID:23</span>
<svg style="left:655.0px;top:7.900000000000045px;" width="20.6" height="20.6" viewBox="0 0 20.6 20.6"><circle cx="10.3" cy="10.3" r="9.3" fill="#f0323c" stroke="#fff" stroke-width="1.300"></circle><path d="M6.500000000000001 6.500000000000001l7.600 7.600M14.100000000000001 6.500000000000001l-7.600 7.600" stroke="#fff" stroke-width="2.200"></path></svg>
<div style="left:732px;top:3px;width:75px;height:75px;background:#666666;border:3px solid #4aa8e2;border-radius:5px;"></div>
<div style="left:738px;top:22px;width:63px;height:36.5px;background:#fff;"></div>
<div style="left:768px;top:23px;width:1px;height:35px;background:#666;"></div>
<div style="left:739px;top:40px;width:62px;height:1px;background:#666;"></div>
<div style="left:770px;top:24px;width:29px;height:15px;background:repeating-linear-gradient(180deg,#666 0,#666 1px,transparent 1px,transparent 3px);opacity:.75;"></div>
<div style="left:770px;top:42px;width:29px;height:16px;background:repeating-linear-gradient(180deg,#666 0,#666 1px,transparent 1px,transparent 3px);opacity:.75;"></div>
<div style="left:741px;top:24px;width:22px;height:2px;background:repeating-linear-gradient(180deg,#777 0,#777 1px,transparent 1px,transparent 3px);opacity:.75;"></div>
<div style="left:741px;top:42px;width:15px;height:2px;background:repeating-linear-gradient(180deg,#777 0,#777 1px,transparent 1px,transparent 3px);opacity:.75;"></div>
<div style="left:772px;top:27px;width:2px;height:2px;background:#f060b0;"></div>
<div style="left:772px;top:45px;width:2px;height:2px;background:#f060b0;"></div>
<span class="t s" style="left: 739px; top: 58.7px; height: 16px; line-height: 16px; font-size: 14px; color: rgb(238, 238, 238); -webkit-text-stroke: 0.15px rgb(238, 238, 238); transform: scaleX(1.013);">ID:5</span>
<svg style="left:736.0px;top:7.900000000000045px;" width="20.6" height="20.6" viewBox="0 0 20.6 20.6"><circle cx="10.3" cy="10.3" r="9.3" fill="#2e9fe0" stroke="#fff" stroke-width="1.300"></circle><path d="M6.1000000000000005 10.600000000000001l3 3 5.500-6" fill="none" stroke="#fff" stroke-width="2.300"></path></svg>
<div style="left:813px;top:3px;width:75px;height:75px;background:#666666;border:3px solid #7e7e7e;border-radius:5px;"></div>
<div style="left:819px;top:33.5px;width:63px;height:14.5px;background:#fff;"></div>
<div style="left:823px;top:35px;width:22px;height:3px;background:repeating-linear-gradient(180deg,#666 0,#666 1px,transparent 1px,transparent 3px);opacity:.75;"></div>
<div style="left:819px;top:39px;width:63px;height:1px;background:#999;"></div>
<div style="left:819px;top:41px;width:63px;height:2px;background:#d5e6f2;"></div>
<div style="left:837px;top:41px;width:40px;height:6px;background:#fdeaf3;border:.5px solid #e88cc0;"></div>
<div style="left:839px;top:43px;width:36px;height:4px;background:repeating-linear-gradient(180deg,#888 0,#888 1px,transparent 1px,transparent 2px);opacity:.75;"></div>
<div style="left:822px;top:41px;width:1px;height:7px;background:#999;"></div>
<span class="t s" style="left: 820px; top: 58.7px; height: 16px; line-height: 16px; font-size: 14px; color: rgb(238, 238, 238); -webkit-text-stroke: 0.15px rgb(238, 238, 238); transform: scaleX(1.013);">ID:7</span>
<svg style="left:817.0px;top:7.900000000000045px;" width="20.6" height="20.6" viewBox="0 0 20.6 20.6"><circle cx="10.3" cy="10.3" r="9.3" fill="#f0323c" stroke="#fff" stroke-width="1.300"></circle><path d="M6.500000000000001 6.500000000000001l7.600 7.600M14.100000000000001 6.500000000000001l-7.600 7.600" stroke="#fff" stroke-width="2.200"></path></svg>
<div style="left:894px;top:3px;width:75px;height:75px;background:#666666;border:3px solid #7e7e7e;border-radius:5px;"></div>
<div style="left:899.5px;top:31px;width:63.5px;height:19px;background:#fff;"></div>
<div style="left:900px;top:31px;width:63px;height:1px;background:#bcd8ee;"></div>
<div style="left:912px;top:31px;width:1px;height:19px;background:#999;"></div>
<div style="left:914px;top:32px;width:33px;height:5px;background:repeating-linear-gradient(180deg,#777 0,#777 1px,transparent 1px,transparent 3px);opacity:.75;"></div>
<div style="left:912px;top:38px;width:51px;height:1px;background:#999;"></div>
<div style="left:912px;top:38px;width:22px;height:3px;background:#fdeaf3;border:.5px solid #e88cc0;"></div>
<div style="left:931px;top:40px;width:12px;height:9px;background:repeating-linear-gradient(180deg,#888 0,#888 1px,transparent 1px,transparent 3px);opacity:.75;"></div>
<div style="left:901px;top:33px;width:6px;height:2px;background:repeating-linear-gradient(180deg,#888 0,#888 1px,transparent 1px,transparent 3px);opacity:.75;"></div>
<div style="left:912px;top:48px;width:10px;height:1px;background:repeating-linear-gradient(180deg,#999 0,#999 1px,transparent 1px,transparent 3px);opacity:.75;"></div>
<span class="t s" style="left: 901px; top: 58.7px; height: 16px; line-height: 16px; font-size: 14px; color: rgb(238, 238, 238); -webkit-text-stroke: 0.15px rgb(238, 238, 238); transform: scaleX(1.013);">ID:9</span>
<div style="left:975px;top:3px;width:75px;height:75px;background:#666666;border:3px solid #7e7e7e;border-radius:5px;"></div>
<div style="left:980.5px;top:21.5px;width:30px;height:36px;background:#fff;"></div>
<div style="left:988px;top:38px;width:14px;height:4px;background:repeating-linear-gradient(180deg,#999 0,#999 1px,transparent 1px,transparent 3px);opacity:.75;"></div>
<div style="left:987px;top:50px;width:15px;height:1px;background:repeating-linear-gradient(180deg,#aaa 0,#aaa 1px,transparent 1px,transparent 3px);opacity:.75;"></div>
<div style="left:989px;top:53px;width:12px;height:3px;background:repeating-linear-gradient(180deg,#bbb 0,#bbb 1px,transparent 1px,transparent 3px);opacity:.75;"></div>
<span class="t s" style="left: 982px; top: 58.7px; height: 16px; line-height: 16px; font-size: 14px; color: rgb(238, 238, 238); -webkit-text-stroke: 0.15px rgb(238, 238, 238); transform: scaleX(1.013);">ID:1</span>
<svg style="left:979.0px;top:7.900000000000045px;" width="20.6" height="20.6" viewBox="0 0 20.6 20.6"><circle cx="10.3" cy="10.3" r="9.3" fill="#f0323c" stroke="#fff" stroke-width="1.300"></circle><path d="M6.500000000000001 6.500000000000001l7.600 7.600M14.100000000000001 6.500000000000001l-7.600 7.600" stroke="#fff" stroke-width="2.200"></path></svg>
<div style="left:787px;top:11.5px;width:15.5px;height:10.5px;background:#999;border:1.500px solid #fff;"></div>
<div style="left:782px;top:62px;width:21px;height:12px;background:#1e1e1e;border-radius:2px;"></div>
<svg style="left:786px;top:63px;" width="14" height="10" viewBox="0 0 14 10"><path d="M4.500 2A4 4 0 1 1 4.500 8" fill="none" stroke="#fff" stroke-width="1.100"></path><path d="M0 3.800h8V1.500L12.500 5 8 8.500V6.200H0z" fill="none" stroke="#fff" stroke-width="1"></path></svg>
</div>
<svg style="left:257.5px;top:756.5px;" width="5" height="8" viewBox="0 0 5 8"><path d="M4.500 0v7.500L0 3.700z" fill="#8a8a8a"></path></svg>
<div style="left:347px;top:758px;width:323px;height:5px;background:#8a8a8a;"></div>
<svg style="left:1243px;top:756.5px;" width="5" height="8" viewBox="0 0 5 8"><path d="M0 0v7.500l4.500-3.700z" fill="#8a8a8a"></path></svg>
<div style="left:1px;top:766px;width:1254px;height:1px;background:#696969;"></div>
<div style="left:1px;top:767px;width:1254px;height:24px;background:#333333;"></div>
<span class="t" style="left: 9px; top: 771.5px; height: 16px; line-height: 16px; font-size: 12px; color: rgb(255, 255, 255); transform: scaleX(1.037);">総指摘件数:37件</span>
<span class="t" style="left: 109px; top: 771.5px; height: 16px; line-height: 16px; font-size: 12px; color: rgb(255, 255, 255); transform: scaleX(1.036);">未修正:25件</span>
<span class="t" style="left: 185.5px; top: 771.5px; height: 16px; line-height: 16px; font-size: 12px; color: rgb(255, 255, 255); transform: scaleX(1.026);">修正済:2件</span>
<span class="t" style="left: 254px; top: 771.5px; height: 16px; line-height: 16px; font-size: 12px; color: rgb(255, 255, 255); transform: scaleX(1.034);">確認済:6件</span>
<span class="t" style="left: 323px; top: 771.5px; height: 16px; line-height: 16px; font-size: 12px; color: rgb(255, 255, 255); transform: scaleX(1.028);">対策不要:2件</span>
<span class="t" style="left: 403px; top: 771.5px; height: 16px; line-height: 16px; font-size: 12px; color: rgb(255, 255, 255); transform: scaleX(0.802);">グッドポイント:2件</span>
<div style="left:864px;top:770px;width:1px;height:18px;background:#ddd;"></div>
<svg style="left:1241px;top:777px;" width="12" height="12" viewBox="0 0 12 12"><g fill="#999"><rect x="9" y="0" width="2" height="2"></rect><rect x="6" y="3" width="2" height="2"></rect><rect x="9" y="3" width="2" height="2"></rect><rect x="3" y="6" width="2" height="2"></rect><rect x="6" y="6" width="2" height="2"></rect><rect x="9" y="6" width="2" height="2"></rect><rect x="0" y="9" width="2" height="2"></rect><rect x="3" y="9" width="2" height="2"></rect><rect x="6" y="9" width="2" height="2"></rect><rect x="9" y="9" width="2" height="2"></rect></g></svg>
<div style="left:0px;top:791px;width:1255px;height:1px;background:#2e6a98;"></div>
<div style="left:1254px;top:1px;width:1px;height:790px;background:#4a4f55;"></div>
</body></html>
